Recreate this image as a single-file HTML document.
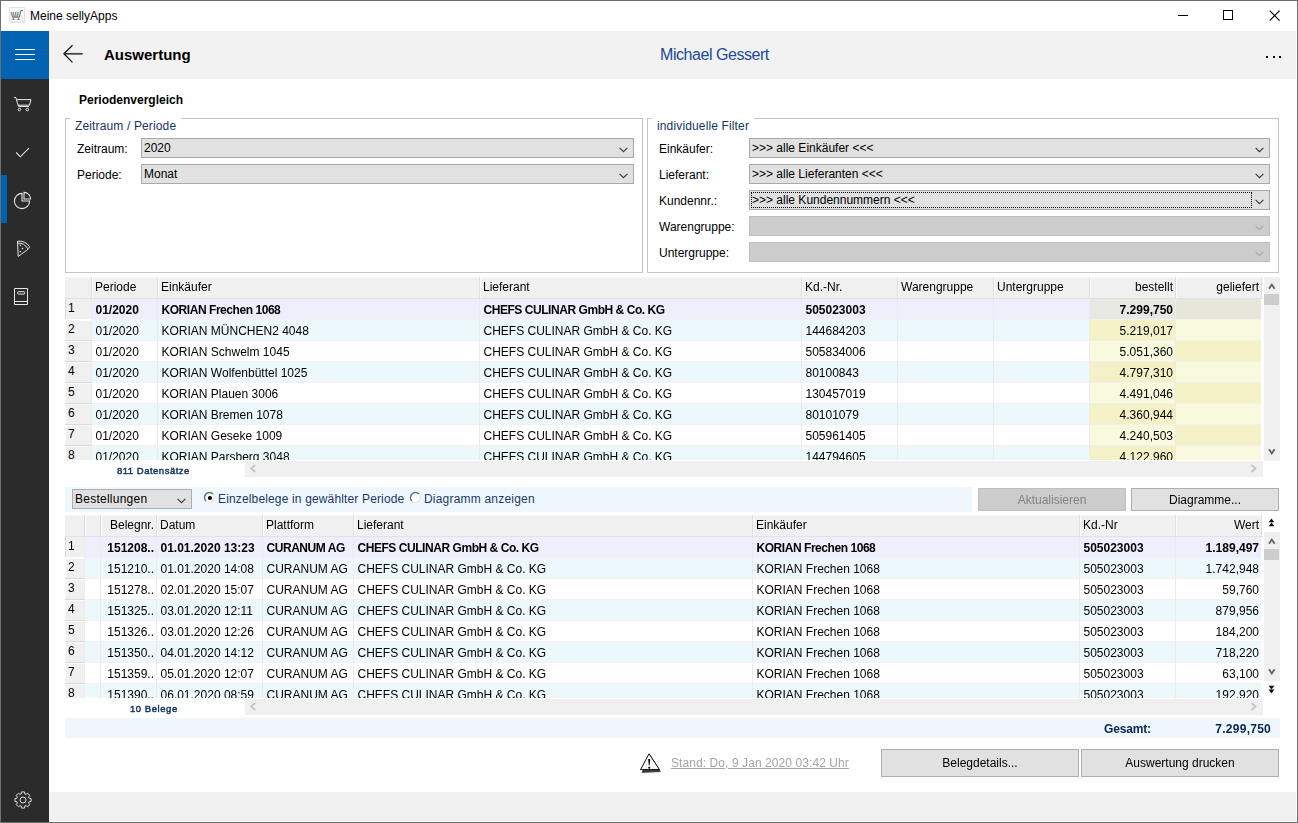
<!DOCTYPE html><html><head><meta charset="utf-8"><style>
html,body{margin:0;padding:0;width:1298px;height:823px;overflow:hidden;background:#fff;font-family:"Liberation Sans", sans-serif;}
div{box-sizing:border-box;}
</style></head><body>
<div style="position:absolute;left:0px;top:0px;width:1298px;height:823px;border:1px solid #6e6e6e;background:#fff;"></div>
<div style="position:absolute;left:9px;top:7px;width:16px;height:16px;background:linear-gradient(#fbfbfb,#ececec);border:1px solid #e2e2e2;"></div>
<svg style="position:absolute;left:9px;top:7px" width="16" height="16" viewBox="0 0 16 16"><path d="M2.2 5 L3.6 10 M4.3 5 L5.3 10 M6.6 5 L7 10 M9 5 L8.6 10 M11.7 3.6 L13.9 3.6 M11.7 3.6 L10.4 10.2 M3.4 10.2 L10.6 10.2" stroke="#808080" stroke-width="1.2" fill="none"/><path d="M3.2 12.3 L5.6 12.3 M8.2 12.3 L10.6 12.3 M4.4 11 L4.4 12.5 M9.4 11 L9.4 12.5" stroke="#808080" stroke-width="1" fill="none"/></svg>
<div style="position:absolute;left:30px;top:7.84px;line-height:16px;font-size:12px;font-weight:normal;color:#000;white-space:nowrap;">Meine sellyApps</div>
<div style="position:absolute;left:1178px;top:15px;width:10px;height:1px;background:#000;"></div>
<div style="position:absolute;left:1223px;top:10px;width:10px;height:10px;border:1px solid #000;"></div>
<svg style="position:absolute;left:1268.5px;top:9.5px" width="12" height="12" viewBox="0 0 12 12"><path d="M0.7 0.7 L10.6 10.6 M10.6 0.7 L0.7 10.6" stroke="#000" stroke-width="1.1" fill="none"/></svg>
<div style="position:absolute;left:1px;top:31px;width:48px;height:791px;background:#2b2b2b;"></div>
<div style="position:absolute;left:1px;top:31px;width:48px;height:48px;background:#0063b1;"></div>
<div style="position:absolute;left:15px;top:49px;width:20px;height:1px;background:#fff;"></div>
<div style="position:absolute;left:15px;top:54px;width:20px;height:1px;background:#fff;"></div>
<div style="position:absolute;left:15px;top:59px;width:20px;height:1px;background:#fff;"></div>
<div style="position:absolute;left:1px;top:175px;width:6px;height:48px;background:#0063b1;"></div>
<svg style="position:absolute;left:12px;top:95px" width="22" height="18" viewBox="0 0 22 18"><path d="M2 2.5 L3.8 2.5 L6.5 11.5 L17 11.5 M4.6 4.6 L19 4.6 L17.5 10.2 L6 10.2" stroke="#e6e6e6" stroke-width="1" fill="none" stroke-linejoin="round"/><circle cx="7.4" cy="14.5" r="1.3" stroke="#e6e6e6" stroke-width="1" fill="none"/><circle cx="15.3" cy="14.5" r="1.3" stroke="#e6e6e6" stroke-width="1" fill="none"/></svg>
<svg style="position:absolute;left:14px;top:146px" width="18" height="13" viewBox="0 0 18 13"><path d="M2.2 6.5 L6.3 10.8 L15 2.2" stroke="#e6e6e6" stroke-width="1.1" fill="none"/></svg>
<svg style="position:absolute;left:12px;top:190px" width="22" height="22" viewBox="0 0 22 22"><path d="M10 3.4 A7.6 7.6 0 1 0 17.6 11 L10 11 Z" stroke="#e6e6e6" stroke-width="1.1" fill="none"/><path d="M12 2.4 A6.6 6.6 0 0 1 18.6 9 L12 9 Z" stroke="#e6e6e6" stroke-width="1.1" fill="none"/></svg>
<svg style="position:absolute;left:14px;top:238px" width="18" height="22" viewBox="0 0 18 22"><path d="M4.2 18.4 L3.5 3.2 Q11.2 2.4 15.6 8.6 Q15.4 10.6 12.6 12.4 Z" stroke="#e6e6e6" stroke-width="1" fill="none" stroke-linejoin="round"/><path d="M4 5.3 Q10.2 4.6 13.8 10.8" stroke="#e6e6e6" stroke-width="1" fill="none"/><path d="M6.4 6.5 L7.3 7.4 L6.4 8.3 L5.5 7.4 Z M8.5 9.6 L9.4 10.5 L8.5 11.4 L7.6 10.5 Z M6.3 12.6 L7.2 13.5 L6.3 14.4 L5.4 13.5 Z" fill="#e6e6e6"/></svg>
<svg style="position:absolute;left:13px;top:287px" width="16" height="20" viewBox="0 0 16 20"><path d="M1.5 1.5 L14.5 1.5 L14.5 17.5 L1.5 17.5 Z M1.5 14.5 L14.5 14.5" stroke="#e6e6e6" stroke-width="1" fill="none"/><rect x="4.7" y="4.7" width="6.9" height="2.4" rx="0.6" stroke="#e6e6e6" stroke-width="1" fill="none"/></svg>
<svg style="position:absolute;left:5.5px;top:782.5px" width="34" height="34" viewBox="0 0 34 34"><path d="M15.08 11.10 L15.58 8.92 L18.42 8.92 L18.92 11.10 L19.81 11.48 L21.70 10.28 L23.72 12.30 L22.52 14.19 L22.90 15.08 L25.08 15.58 L25.08 18.42 L22.90 18.92 L22.52 19.81 L23.72 21.70 L21.70 23.72 L19.81 22.52 L18.92 22.90 L18.42 25.08 L15.58 25.08 L15.08 22.90 L14.19 22.52 L12.30 23.72 L10.28 21.70 L11.48 19.81 L11.10 18.92 L8.92 18.42 L8.92 15.58 L11.10 15.08 L11.48 14.19 L10.28 12.30 L12.30 10.28 L14.19 11.48 Z" stroke="#e6e6e6" stroke-width="1" fill="none" stroke-linejoin="miter"/><circle cx="17" cy="17" r="3" stroke="#e6e6e6" stroke-width="1" fill="none"/></svg>
<div style="position:absolute;left:49px;top:31px;width:1247px;height:48px;background:#f2f2f2;"></div>
<svg style="position:absolute;left:62px;top:44px" width="22" height="20" viewBox="0 0 22 20"><path d="M3 9.8 L20.7 9.8" stroke="#474747" stroke-width="1.8" fill="none"/><path d="M10.5 1.3 L1.9 9.8 L10.5 18.4" stroke="#111" stroke-width="1.25" fill="none"/></svg>
<div style="position:absolute;left:104px;top:45.30px;line-height:19px;font-size:15px;font-weight:bold;color:#000;white-space:nowrap;">Auswertung</div>
<div style="position:absolute;left:660px;top:45.46px;line-height:20px;font-size:16px;font-weight:normal;color:#1a4a98;white-space:nowrap;letter-spacing:-0.45px;">Michael Gessert</div>
<div style="position:absolute;left:1266.0px;top:55.5px;width:2px;height:2px;background:#000;"></div>
<div style="position:absolute;left:1272.6px;top:55.5px;width:2px;height:2px;background:#000;"></div>
<div style="position:absolute;left:1279.2px;top:55.5px;width:2px;height:2px;background:#000;"></div>
<div style="position:absolute;left:79px;top:91.84px;line-height:16px;font-size:12px;font-weight:bold;color:#000;white-space:nowrap;">Periodenvergleich</div>
<div style="position:absolute;left:65px;top:118px;width:1px;height:155px;background:#c5c5c5;"></div>
<div style="position:absolute;left:642px;top:118px;width:1px;height:155px;background:#c5c5c5;"></div>
<div style="position:absolute;left:65px;top:272px;width:578px;height:1px;background:#c5c5c5;"></div>
<div style="position:absolute;left:65px;top:118px;width:5px;height:1px;background:#c5c5c5;"></div>
<div style="position:absolute;left:181px;top:118px;width:462px;height:1px;background:#c5c5c5;"></div>
<div style="position:absolute;left:75px;top:117.84px;line-height:16px;font-size:12px;font-weight:normal;color:#17345f;white-space:nowrap;letter-spacing:0.14px;">Zeitraum / Periode</div>
<div style="position:absolute;left:77px;top:140.84px;line-height:16px;font-size:12px;font-weight:normal;color:#000;white-space:nowrap;">Zeitraum:</div>
<div style="position:absolute;left:77px;top:166.84px;line-height:16px;font-size:12px;font-weight:normal;color:#000;white-space:nowrap;">Periode:</div>
<div style="position:absolute;left:141px;top:138px;width:493px;height:20px;background:#e1e1e1;border:1px solid #a7a7ae;"></div>
<svg style="position:absolute;left:619.0px;top:147.0px" width="9" height="6" viewBox="0 0 9 6"><path d="M0.6 0.8 L4.5 4.7 L8.4 0.8" stroke="#3c3c3c" stroke-width="1.15" fill="none"/></svg>
<div style="position:absolute;left:144px;top:139.84px;line-height:16px;font-size:12px;font-weight:normal;color:#000;white-space:nowrap;">2020</div>
<div style="position:absolute;left:141px;top:164px;width:493px;height:20px;background:#e1e1e1;border:1px solid #a7a7ae;"></div>
<svg style="position:absolute;left:619.0px;top:173.0px" width="9" height="6" viewBox="0 0 9 6"><path d="M0.6 0.8 L4.5 4.7 L8.4 0.8" stroke="#3c3c3c" stroke-width="1.15" fill="none"/></svg>
<div style="position:absolute;left:144px;top:165.84px;line-height:16px;font-size:12px;font-weight:normal;color:#000;white-space:nowrap;">Monat</div>
<div style="position:absolute;left:647px;top:118px;width:1px;height:155px;background:#c5c5c5;"></div>
<div style="position:absolute;left:1278px;top:118px;width:1px;height:155px;background:#c5c5c5;"></div>
<div style="position:absolute;left:647px;top:272px;width:632px;height:1px;background:#c5c5c5;"></div>
<div style="position:absolute;left:647px;top:118px;width:5px;height:1px;background:#c5c5c5;"></div>
<div style="position:absolute;left:754px;top:118px;width:525px;height:1px;background:#c5c5c5;"></div>
<div style="position:absolute;left:657px;top:117.84px;line-height:16px;font-size:12px;font-weight:normal;color:#17345f;white-space:nowrap;letter-spacing:0.14px;">individuelle Filter</div>
<div style="position:absolute;left:659px;top:140.84px;line-height:16px;font-size:12px;font-weight:normal;color:#000;white-space:nowrap;">Einkäufer:</div>
<div style="position:absolute;left:749px;top:138px;width:521px;height:20px;background:#e1e1e1;border:1px solid #a7a7ae;"></div>
<svg style="position:absolute;left:1255.0px;top:147.0px" width="9" height="6" viewBox="0 0 9 6"><path d="M0.6 0.8 L4.5 4.7 L8.4 0.8" stroke="#3c3c3c" stroke-width="1.15" fill="none"/></svg>
<div style="position:absolute;left:752px;top:139.84px;line-height:16px;font-size:12px;font-weight:normal;color:#000;white-space:nowrap;">&gt;&gt;&gt; alle Einkäufer &lt;&lt;&lt;</div>
<div style="position:absolute;left:659px;top:166.84px;line-height:16px;font-size:12px;font-weight:normal;color:#000;white-space:nowrap;">Lieferant:</div>
<div style="position:absolute;left:749px;top:164px;width:521px;height:20px;background:#e1e1e1;border:1px solid #a7a7ae;"></div>
<svg style="position:absolute;left:1255.0px;top:173.0px" width="9" height="6" viewBox="0 0 9 6"><path d="M0.6 0.8 L4.5 4.7 L8.4 0.8" stroke="#3c3c3c" stroke-width="1.15" fill="none"/></svg>
<div style="position:absolute;left:752px;top:165.84px;line-height:16px;font-size:12px;font-weight:normal;color:#000;white-space:nowrap;">&gt;&gt;&gt; alle Lieferanten &lt;&lt;&lt;</div>
<div style="position:absolute;left:659px;top:192.84px;line-height:16px;font-size:12px;font-weight:normal;color:#000;white-space:nowrap;">Kundennr.:</div>
<div style="position:absolute;left:749px;top:190px;width:521px;height:20px;background:#e1e1e1;border:1px solid #a7a7ae;"></div>
<svg style="position:absolute;left:1255.0px;top:199.0px" width="9" height="6" viewBox="0 0 9 6"><path d="M0.6 0.8 L4.5 4.7 L8.4 0.8" stroke="#3c3c3c" stroke-width="1.15" fill="none"/></svg>
<div style="position:absolute;left:751px;top:192px;width:501px;height:16px;border:1px dotted #000;"></div>
<div style="position:absolute;left:752px;top:191.84px;line-height:16px;font-size:12px;font-weight:normal;color:#000;white-space:nowrap;">&gt;&gt;&gt; alle Kundennummern &lt;&lt;&lt;</div>
<div style="position:absolute;left:659px;top:218.84px;line-height:16px;font-size:12px;font-weight:normal;color:#000;white-space:nowrap;">Warengruppe:</div>
<div style="position:absolute;left:749px;top:216px;width:521px;height:20px;background:#cccccc;border:1px solid #bfbfbf;"></div>
<svg style="position:absolute;left:1255.0px;top:225.0px" width="9" height="6" viewBox="0 0 9 6"><path d="M0.6 0.8 L4.5 4.7 L8.4 0.8" stroke="#a8a8a8" stroke-width="1.15" fill="none"/></svg>
<div style="position:absolute;left:659px;top:244.84px;line-height:16px;font-size:12px;font-weight:normal;color:#000;white-space:nowrap;">Untergruppe:</div>
<div style="position:absolute;left:749px;top:242px;width:521px;height:20px;background:#cccccc;border:1px solid #bfbfbf;"></div>
<svg style="position:absolute;left:1255.0px;top:251.0px" width="9" height="6" viewBox="0 0 9 6"><path d="M0.6 0.8 L4.5 4.7 L8.4 0.8" stroke="#a8a8a8" stroke-width="1.15" fill="none"/></svg>
<div style="position:absolute;left:65px;top:277px;width:1196px;height:21px;background:#f0f0f0;"></div>
<div style="position:absolute;left:65px;top:277px;width:1196px;height:1px;background:#f8f8f8;"></div>
<div style="position:absolute;left:65px;top:298px;width:1198px;height:1px;background:#e2e2e2;"></div>
<div style="position:absolute;left:1261px;top:277px;width:1px;height:21px;background:#e0e0e0;"></div>
<div style="position:absolute;left:0;top:299px;width:1298px;height:161px;overflow:hidden;">
<div style="position:absolute;left:65px;top:0px;width:26px;height:20px;background:#f0f0f0;"></div>
<div style="position:absolute;left:65px;top:0px;width:1px;height:20px;background:#d6d6d6;"></div>
<div style="position:absolute;left:65px;top:20px;width:26px;height:1px;background:#ffffff;"></div>
<div style="position:absolute;left:92px;top:0px;width:65px;height:20px;background:#efeefc;"></div>
<div style="position:absolute;left:92px;top:20px;width:65px;height:1px;background:#f1f1f1;"></div>
<div style="position:absolute;left:158px;top:0px;width:321px;height:20px;background:#efeefc;"></div>
<div style="position:absolute;left:158px;top:20px;width:321px;height:1px;background:#f1f1f1;"></div>
<div style="position:absolute;left:480px;top:0px;width:321px;height:20px;background:#efeefc;"></div>
<div style="position:absolute;left:480px;top:20px;width:321px;height:1px;background:#f1f1f1;"></div>
<div style="position:absolute;left:802px;top:0px;width:95px;height:20px;background:#efeefc;"></div>
<div style="position:absolute;left:802px;top:20px;width:95px;height:1px;background:#f1f1f1;"></div>
<div style="position:absolute;left:898px;top:0px;width:95px;height:20px;background:#efeefc;"></div>
<div style="position:absolute;left:898px;top:20px;width:95px;height:1px;background:#f1f1f1;"></div>
<div style="position:absolute;left:994px;top:0px;width:95px;height:20px;background:#efeefc;"></div>
<div style="position:absolute;left:994px;top:20px;width:95px;height:1px;background:#f1f1f1;"></div>
<div style="position:absolute;left:1090px;top:0px;width:85px;height:20px;background:#e8e8e2;"></div>
<div style="position:absolute;left:1090px;top:20px;width:85px;height:1px;background:#f1f1f1;"></div>
<div style="position:absolute;left:1176px;top:0px;width:85px;height:20px;background:#e6e6da;"></div>
<div style="position:absolute;left:1176px;top:20px;width:85px;height:1px;background:#f1f1f1;"></div>
<div style="position:absolute;left:91px;top:0px;width:1px;height:21px;background:#ebebeb;"></div>
<div style="position:absolute;left:157px;top:0px;width:1px;height:21px;background:#ebebeb;"></div>
<div style="position:absolute;left:479px;top:0px;width:1px;height:21px;background:#ebebeb;"></div>
<div style="position:absolute;left:801px;top:0px;width:1px;height:21px;background:#ebebeb;"></div>
<div style="position:absolute;left:897px;top:0px;width:1px;height:21px;background:#ebebeb;"></div>
<div style="position:absolute;left:993px;top:0px;width:1px;height:21px;background:#ebebeb;"></div>
<div style="position:absolute;left:1089px;top:0px;width:1px;height:21px;background:#ebebeb;"></div>
<div style="position:absolute;left:1175px;top:0px;width:1px;height:21px;background:#ebebeb;"></div>
<div style="position:absolute;left:68px;top:0.80px;line-height:16px;font-size:12px;color:#000;">1</div>
<div style="position:absolute;left:65px;top:21px;width:26px;height:20px;background:#f0f0f0;"></div>
<div style="position:absolute;left:65px;top:21px;width:26px;height:1px;background:#fbfbfb;"></div>
<div style="position:absolute;left:65px;top:21px;width:1px;height:20px;background:#fbfbfb;"></div>
<div style="position:absolute;left:65px;top:41px;width:26px;height:1px;background:#d9d9d9;"></div>
<div style="position:absolute;left:92px;top:21px;width:65px;height:20px;background:#edf8fd;"></div>
<div style="position:absolute;left:92px;top:41px;width:65px;height:1px;background:#f1f1f1;"></div>
<div style="position:absolute;left:158px;top:21px;width:321px;height:20px;background:#edf8fd;"></div>
<div style="position:absolute;left:158px;top:41px;width:321px;height:1px;background:#f1f1f1;"></div>
<div style="position:absolute;left:480px;top:21px;width:321px;height:20px;background:#edf8fd;"></div>
<div style="position:absolute;left:480px;top:41px;width:321px;height:1px;background:#f1f1f1;"></div>
<div style="position:absolute;left:802px;top:21px;width:95px;height:20px;background:#edf8fd;"></div>
<div style="position:absolute;left:802px;top:41px;width:95px;height:1px;background:#f1f1f1;"></div>
<div style="position:absolute;left:898px;top:21px;width:95px;height:20px;background:#edf8fd;"></div>
<div style="position:absolute;left:898px;top:41px;width:95px;height:1px;background:#f1f1f1;"></div>
<div style="position:absolute;left:994px;top:21px;width:95px;height:20px;background:#edf8fd;"></div>
<div style="position:absolute;left:994px;top:41px;width:95px;height:1px;background:#f1f1f1;"></div>
<div style="position:absolute;left:1090px;top:21px;width:85px;height:20px;background:#f4f1c6;"></div>
<div style="position:absolute;left:1090px;top:41px;width:85px;height:1px;background:#f1f1f1;"></div>
<div style="position:absolute;left:1176px;top:21px;width:85px;height:20px;background:#f9f9dd;"></div>
<div style="position:absolute;left:1176px;top:41px;width:85px;height:1px;background:#f1f1f1;"></div>
<div style="position:absolute;left:91px;top:21px;width:1px;height:21px;background:#ebebeb;"></div>
<div style="position:absolute;left:157px;top:21px;width:1px;height:21px;background:#ebebeb;"></div>
<div style="position:absolute;left:479px;top:21px;width:1px;height:21px;background:#ebebeb;"></div>
<div style="position:absolute;left:801px;top:21px;width:1px;height:21px;background:#ebebeb;"></div>
<div style="position:absolute;left:897px;top:21px;width:1px;height:21px;background:#ebebeb;"></div>
<div style="position:absolute;left:993px;top:21px;width:1px;height:21px;background:#ebebeb;"></div>
<div style="position:absolute;left:1089px;top:21px;width:1px;height:21px;background:#ebebeb;"></div>
<div style="position:absolute;left:1175px;top:21px;width:1px;height:21px;background:#ebebeb;"></div>
<div style="position:absolute;left:68px;top:21.80px;line-height:16px;font-size:12px;color:#000;">2</div>
<div style="position:absolute;left:65px;top:42px;width:26px;height:20px;background:#f0f0f0;"></div>
<div style="position:absolute;left:65px;top:42px;width:26px;height:1px;background:#fbfbfb;"></div>
<div style="position:absolute;left:65px;top:42px;width:1px;height:20px;background:#fbfbfb;"></div>
<div style="position:absolute;left:65px;top:62px;width:26px;height:1px;background:#d9d9d9;"></div>
<div style="position:absolute;left:92px;top:42px;width:65px;height:20px;background:#ffffff;"></div>
<div style="position:absolute;left:92px;top:62px;width:65px;height:1px;background:#f1f1f1;"></div>
<div style="position:absolute;left:158px;top:42px;width:321px;height:20px;background:#ffffff;"></div>
<div style="position:absolute;left:158px;top:62px;width:321px;height:1px;background:#f1f1f1;"></div>
<div style="position:absolute;left:480px;top:42px;width:321px;height:20px;background:#ffffff;"></div>
<div style="position:absolute;left:480px;top:62px;width:321px;height:1px;background:#f1f1f1;"></div>
<div style="position:absolute;left:802px;top:42px;width:95px;height:20px;background:#ffffff;"></div>
<div style="position:absolute;left:802px;top:62px;width:95px;height:1px;background:#f1f1f1;"></div>
<div style="position:absolute;left:898px;top:42px;width:95px;height:20px;background:#ffffff;"></div>
<div style="position:absolute;left:898px;top:62px;width:95px;height:1px;background:#f1f1f1;"></div>
<div style="position:absolute;left:994px;top:42px;width:95px;height:20px;background:#ffffff;"></div>
<div style="position:absolute;left:994px;top:62px;width:95px;height:1px;background:#f1f1f1;"></div>
<div style="position:absolute;left:1090px;top:42px;width:85px;height:20px;background:#f9f9dd;"></div>
<div style="position:absolute;left:1090px;top:62px;width:85px;height:1px;background:#f1f1f1;"></div>
<div style="position:absolute;left:1176px;top:42px;width:85px;height:20px;background:#f4f1c6;"></div>
<div style="position:absolute;left:1176px;top:62px;width:85px;height:1px;background:#f1f1f1;"></div>
<div style="position:absolute;left:91px;top:42px;width:1px;height:21px;background:#ebebeb;"></div>
<div style="position:absolute;left:157px;top:42px;width:1px;height:21px;background:#ebebeb;"></div>
<div style="position:absolute;left:479px;top:42px;width:1px;height:21px;background:#ebebeb;"></div>
<div style="position:absolute;left:801px;top:42px;width:1px;height:21px;background:#ebebeb;"></div>
<div style="position:absolute;left:897px;top:42px;width:1px;height:21px;background:#ebebeb;"></div>
<div style="position:absolute;left:993px;top:42px;width:1px;height:21px;background:#ebebeb;"></div>
<div style="position:absolute;left:1089px;top:42px;width:1px;height:21px;background:#ebebeb;"></div>
<div style="position:absolute;left:1175px;top:42px;width:1px;height:21px;background:#ebebeb;"></div>
<div style="position:absolute;left:68px;top:42.80px;line-height:16px;font-size:12px;color:#000;">3</div>
<div style="position:absolute;left:65px;top:63px;width:26px;height:20px;background:#f0f0f0;"></div>
<div style="position:absolute;left:65px;top:63px;width:26px;height:1px;background:#fbfbfb;"></div>
<div style="position:absolute;left:65px;top:63px;width:1px;height:20px;background:#fbfbfb;"></div>
<div style="position:absolute;left:65px;top:83px;width:26px;height:1px;background:#d9d9d9;"></div>
<div style="position:absolute;left:92px;top:63px;width:65px;height:20px;background:#edf8fd;"></div>
<div style="position:absolute;left:92px;top:83px;width:65px;height:1px;background:#f1f1f1;"></div>
<div style="position:absolute;left:158px;top:63px;width:321px;height:20px;background:#edf8fd;"></div>
<div style="position:absolute;left:158px;top:83px;width:321px;height:1px;background:#f1f1f1;"></div>
<div style="position:absolute;left:480px;top:63px;width:321px;height:20px;background:#edf8fd;"></div>
<div style="position:absolute;left:480px;top:83px;width:321px;height:1px;background:#f1f1f1;"></div>
<div style="position:absolute;left:802px;top:63px;width:95px;height:20px;background:#edf8fd;"></div>
<div style="position:absolute;left:802px;top:83px;width:95px;height:1px;background:#f1f1f1;"></div>
<div style="position:absolute;left:898px;top:63px;width:95px;height:20px;background:#edf8fd;"></div>
<div style="position:absolute;left:898px;top:83px;width:95px;height:1px;background:#f1f1f1;"></div>
<div style="position:absolute;left:994px;top:63px;width:95px;height:20px;background:#edf8fd;"></div>
<div style="position:absolute;left:994px;top:83px;width:95px;height:1px;background:#f1f1f1;"></div>
<div style="position:absolute;left:1090px;top:63px;width:85px;height:20px;background:#f4f1c6;"></div>
<div style="position:absolute;left:1090px;top:83px;width:85px;height:1px;background:#f1f1f1;"></div>
<div style="position:absolute;left:1176px;top:63px;width:85px;height:20px;background:#f9f9dd;"></div>
<div style="position:absolute;left:1176px;top:83px;width:85px;height:1px;background:#f1f1f1;"></div>
<div style="position:absolute;left:91px;top:63px;width:1px;height:21px;background:#ebebeb;"></div>
<div style="position:absolute;left:157px;top:63px;width:1px;height:21px;background:#ebebeb;"></div>
<div style="position:absolute;left:479px;top:63px;width:1px;height:21px;background:#ebebeb;"></div>
<div style="position:absolute;left:801px;top:63px;width:1px;height:21px;background:#ebebeb;"></div>
<div style="position:absolute;left:897px;top:63px;width:1px;height:21px;background:#ebebeb;"></div>
<div style="position:absolute;left:993px;top:63px;width:1px;height:21px;background:#ebebeb;"></div>
<div style="position:absolute;left:1089px;top:63px;width:1px;height:21px;background:#ebebeb;"></div>
<div style="position:absolute;left:1175px;top:63px;width:1px;height:21px;background:#ebebeb;"></div>
<div style="position:absolute;left:68px;top:63.80px;line-height:16px;font-size:12px;color:#000;">4</div>
<div style="position:absolute;left:65px;top:84px;width:26px;height:20px;background:#f0f0f0;"></div>
<div style="position:absolute;left:65px;top:84px;width:26px;height:1px;background:#fbfbfb;"></div>
<div style="position:absolute;left:65px;top:84px;width:1px;height:20px;background:#fbfbfb;"></div>
<div style="position:absolute;left:65px;top:104px;width:26px;height:1px;background:#d9d9d9;"></div>
<div style="position:absolute;left:92px;top:84px;width:65px;height:20px;background:#ffffff;"></div>
<div style="position:absolute;left:92px;top:104px;width:65px;height:1px;background:#f1f1f1;"></div>
<div style="position:absolute;left:158px;top:84px;width:321px;height:20px;background:#ffffff;"></div>
<div style="position:absolute;left:158px;top:104px;width:321px;height:1px;background:#f1f1f1;"></div>
<div style="position:absolute;left:480px;top:84px;width:321px;height:20px;background:#ffffff;"></div>
<div style="position:absolute;left:480px;top:104px;width:321px;height:1px;background:#f1f1f1;"></div>
<div style="position:absolute;left:802px;top:84px;width:95px;height:20px;background:#ffffff;"></div>
<div style="position:absolute;left:802px;top:104px;width:95px;height:1px;background:#f1f1f1;"></div>
<div style="position:absolute;left:898px;top:84px;width:95px;height:20px;background:#ffffff;"></div>
<div style="position:absolute;left:898px;top:104px;width:95px;height:1px;background:#f1f1f1;"></div>
<div style="position:absolute;left:994px;top:84px;width:95px;height:20px;background:#ffffff;"></div>
<div style="position:absolute;left:994px;top:104px;width:95px;height:1px;background:#f1f1f1;"></div>
<div style="position:absolute;left:1090px;top:84px;width:85px;height:20px;background:#f9f9dd;"></div>
<div style="position:absolute;left:1090px;top:104px;width:85px;height:1px;background:#f1f1f1;"></div>
<div style="position:absolute;left:1176px;top:84px;width:85px;height:20px;background:#f4f1c6;"></div>
<div style="position:absolute;left:1176px;top:104px;width:85px;height:1px;background:#f1f1f1;"></div>
<div style="position:absolute;left:91px;top:84px;width:1px;height:21px;background:#ebebeb;"></div>
<div style="position:absolute;left:157px;top:84px;width:1px;height:21px;background:#ebebeb;"></div>
<div style="position:absolute;left:479px;top:84px;width:1px;height:21px;background:#ebebeb;"></div>
<div style="position:absolute;left:801px;top:84px;width:1px;height:21px;background:#ebebeb;"></div>
<div style="position:absolute;left:897px;top:84px;width:1px;height:21px;background:#ebebeb;"></div>
<div style="position:absolute;left:993px;top:84px;width:1px;height:21px;background:#ebebeb;"></div>
<div style="position:absolute;left:1089px;top:84px;width:1px;height:21px;background:#ebebeb;"></div>
<div style="position:absolute;left:1175px;top:84px;width:1px;height:21px;background:#ebebeb;"></div>
<div style="position:absolute;left:68px;top:84.80px;line-height:16px;font-size:12px;color:#000;">5</div>
<div style="position:absolute;left:65px;top:105px;width:26px;height:20px;background:#f0f0f0;"></div>
<div style="position:absolute;left:65px;top:105px;width:26px;height:1px;background:#fbfbfb;"></div>
<div style="position:absolute;left:65px;top:105px;width:1px;height:20px;background:#fbfbfb;"></div>
<div style="position:absolute;left:65px;top:125px;width:26px;height:1px;background:#d9d9d9;"></div>
<div style="position:absolute;left:92px;top:105px;width:65px;height:20px;background:#edf8fd;"></div>
<div style="position:absolute;left:92px;top:125px;width:65px;height:1px;background:#f1f1f1;"></div>
<div style="position:absolute;left:158px;top:105px;width:321px;height:20px;background:#edf8fd;"></div>
<div style="position:absolute;left:158px;top:125px;width:321px;height:1px;background:#f1f1f1;"></div>
<div style="position:absolute;left:480px;top:105px;width:321px;height:20px;background:#edf8fd;"></div>
<div style="position:absolute;left:480px;top:125px;width:321px;height:1px;background:#f1f1f1;"></div>
<div style="position:absolute;left:802px;top:105px;width:95px;height:20px;background:#edf8fd;"></div>
<div style="position:absolute;left:802px;top:125px;width:95px;height:1px;background:#f1f1f1;"></div>
<div style="position:absolute;left:898px;top:105px;width:95px;height:20px;background:#edf8fd;"></div>
<div style="position:absolute;left:898px;top:125px;width:95px;height:1px;background:#f1f1f1;"></div>
<div style="position:absolute;left:994px;top:105px;width:95px;height:20px;background:#edf8fd;"></div>
<div style="position:absolute;left:994px;top:125px;width:95px;height:1px;background:#f1f1f1;"></div>
<div style="position:absolute;left:1090px;top:105px;width:85px;height:20px;background:#f4f1c6;"></div>
<div style="position:absolute;left:1090px;top:125px;width:85px;height:1px;background:#f1f1f1;"></div>
<div style="position:absolute;left:1176px;top:105px;width:85px;height:20px;background:#f9f9dd;"></div>
<div style="position:absolute;left:1176px;top:125px;width:85px;height:1px;background:#f1f1f1;"></div>
<div style="position:absolute;left:91px;top:105px;width:1px;height:21px;background:#ebebeb;"></div>
<div style="position:absolute;left:157px;top:105px;width:1px;height:21px;background:#ebebeb;"></div>
<div style="position:absolute;left:479px;top:105px;width:1px;height:21px;background:#ebebeb;"></div>
<div style="position:absolute;left:801px;top:105px;width:1px;height:21px;background:#ebebeb;"></div>
<div style="position:absolute;left:897px;top:105px;width:1px;height:21px;background:#ebebeb;"></div>
<div style="position:absolute;left:993px;top:105px;width:1px;height:21px;background:#ebebeb;"></div>
<div style="position:absolute;left:1089px;top:105px;width:1px;height:21px;background:#ebebeb;"></div>
<div style="position:absolute;left:1175px;top:105px;width:1px;height:21px;background:#ebebeb;"></div>
<div style="position:absolute;left:68px;top:105.80px;line-height:16px;font-size:12px;color:#000;">6</div>
<div style="position:absolute;left:65px;top:126px;width:26px;height:20px;background:#f0f0f0;"></div>
<div style="position:absolute;left:65px;top:126px;width:26px;height:1px;background:#fbfbfb;"></div>
<div style="position:absolute;left:65px;top:126px;width:1px;height:20px;background:#fbfbfb;"></div>
<div style="position:absolute;left:65px;top:146px;width:26px;height:1px;background:#d9d9d9;"></div>
<div style="position:absolute;left:92px;top:126px;width:65px;height:20px;background:#ffffff;"></div>
<div style="position:absolute;left:92px;top:146px;width:65px;height:1px;background:#f1f1f1;"></div>
<div style="position:absolute;left:158px;top:126px;width:321px;height:20px;background:#ffffff;"></div>
<div style="position:absolute;left:158px;top:146px;width:321px;height:1px;background:#f1f1f1;"></div>
<div style="position:absolute;left:480px;top:126px;width:321px;height:20px;background:#ffffff;"></div>
<div style="position:absolute;left:480px;top:146px;width:321px;height:1px;background:#f1f1f1;"></div>
<div style="position:absolute;left:802px;top:126px;width:95px;height:20px;background:#ffffff;"></div>
<div style="position:absolute;left:802px;top:146px;width:95px;height:1px;background:#f1f1f1;"></div>
<div style="position:absolute;left:898px;top:126px;width:95px;height:20px;background:#ffffff;"></div>
<div style="position:absolute;left:898px;top:146px;width:95px;height:1px;background:#f1f1f1;"></div>
<div style="position:absolute;left:994px;top:126px;width:95px;height:20px;background:#ffffff;"></div>
<div style="position:absolute;left:994px;top:146px;width:95px;height:1px;background:#f1f1f1;"></div>
<div style="position:absolute;left:1090px;top:126px;width:85px;height:20px;background:#f9f9dd;"></div>
<div style="position:absolute;left:1090px;top:146px;width:85px;height:1px;background:#f1f1f1;"></div>
<div style="position:absolute;left:1176px;top:126px;width:85px;height:20px;background:#f4f1c6;"></div>
<div style="position:absolute;left:1176px;top:146px;width:85px;height:1px;background:#f1f1f1;"></div>
<div style="position:absolute;left:91px;top:126px;width:1px;height:21px;background:#ebebeb;"></div>
<div style="position:absolute;left:157px;top:126px;width:1px;height:21px;background:#ebebeb;"></div>
<div style="position:absolute;left:479px;top:126px;width:1px;height:21px;background:#ebebeb;"></div>
<div style="position:absolute;left:801px;top:126px;width:1px;height:21px;background:#ebebeb;"></div>
<div style="position:absolute;left:897px;top:126px;width:1px;height:21px;background:#ebebeb;"></div>
<div style="position:absolute;left:993px;top:126px;width:1px;height:21px;background:#ebebeb;"></div>
<div style="position:absolute;left:1089px;top:126px;width:1px;height:21px;background:#ebebeb;"></div>
<div style="position:absolute;left:1175px;top:126px;width:1px;height:21px;background:#ebebeb;"></div>
<div style="position:absolute;left:68px;top:126.80px;line-height:16px;font-size:12px;color:#000;">7</div>
<div style="position:absolute;left:65px;top:147px;width:26px;height:20px;background:#f0f0f0;"></div>
<div style="position:absolute;left:65px;top:147px;width:26px;height:1px;background:#fbfbfb;"></div>
<div style="position:absolute;left:65px;top:147px;width:1px;height:20px;background:#fbfbfb;"></div>
<div style="position:absolute;left:65px;top:167px;width:26px;height:1px;background:#d9d9d9;"></div>
<div style="position:absolute;left:92px;top:147px;width:65px;height:20px;background:#edf8fd;"></div>
<div style="position:absolute;left:92px;top:167px;width:65px;height:1px;background:#f1f1f1;"></div>
<div style="position:absolute;left:158px;top:147px;width:321px;height:20px;background:#edf8fd;"></div>
<div style="position:absolute;left:158px;top:167px;width:321px;height:1px;background:#f1f1f1;"></div>
<div style="position:absolute;left:480px;top:147px;width:321px;height:20px;background:#edf8fd;"></div>
<div style="position:absolute;left:480px;top:167px;width:321px;height:1px;background:#f1f1f1;"></div>
<div style="position:absolute;left:802px;top:147px;width:95px;height:20px;background:#edf8fd;"></div>
<div style="position:absolute;left:802px;top:167px;width:95px;height:1px;background:#f1f1f1;"></div>
<div style="position:absolute;left:898px;top:147px;width:95px;height:20px;background:#edf8fd;"></div>
<div style="position:absolute;left:898px;top:167px;width:95px;height:1px;background:#f1f1f1;"></div>
<div style="position:absolute;left:994px;top:147px;width:95px;height:20px;background:#edf8fd;"></div>
<div style="position:absolute;left:994px;top:167px;width:95px;height:1px;background:#f1f1f1;"></div>
<div style="position:absolute;left:1090px;top:147px;width:85px;height:20px;background:#f4f1c6;"></div>
<div style="position:absolute;left:1090px;top:167px;width:85px;height:1px;background:#f1f1f1;"></div>
<div style="position:absolute;left:1176px;top:147px;width:85px;height:20px;background:#f9f9dd;"></div>
<div style="position:absolute;left:1176px;top:167px;width:85px;height:1px;background:#f1f1f1;"></div>
<div style="position:absolute;left:91px;top:147px;width:1px;height:21px;background:#ebebeb;"></div>
<div style="position:absolute;left:157px;top:147px;width:1px;height:21px;background:#ebebeb;"></div>
<div style="position:absolute;left:479px;top:147px;width:1px;height:21px;background:#ebebeb;"></div>
<div style="position:absolute;left:801px;top:147px;width:1px;height:21px;background:#ebebeb;"></div>
<div style="position:absolute;left:897px;top:147px;width:1px;height:21px;background:#ebebeb;"></div>
<div style="position:absolute;left:993px;top:147px;width:1px;height:21px;background:#ebebeb;"></div>
<div style="position:absolute;left:1089px;top:147px;width:1px;height:21px;background:#ebebeb;"></div>
<div style="position:absolute;left:1175px;top:147px;width:1px;height:21px;background:#ebebeb;"></div>
<div style="position:absolute;left:68px;top:147.80px;line-height:16px;font-size:12px;color:#000;">8</div>
</div>
<div style="position:absolute;left:0;top:0;width:1298px;height:460px;overflow:hidden;will-change:transform;">
<div style="position:absolute;left:95.5px;width:61.5px;top:302.34px;height:16px;line-height:16px;font-size:12px;font-weight:bold;color:#000;white-space:nowrap;text-align:left;overflow:hidden;overflow:hidden;">01/2020</div>
<div style="position:absolute;left:161.5px;width:317.5px;top:302.34px;height:16px;line-height:16px;font-size:12px;font-weight:bold;color:#000;white-space:nowrap;text-align:left;overflow:hidden;overflow:hidden;letter-spacing:-0.45px;">KORIAN Frechen 1068</div>
<div style="position:absolute;left:483.5px;width:317.5px;top:302.34px;height:16px;line-height:16px;font-size:12px;font-weight:bold;color:#000;white-space:nowrap;text-align:left;overflow:hidden;overflow:hidden;letter-spacing:-0.45px;">CHEFS CULINAR GmbH &amp; Co. KG</div>
<div style="position:absolute;left:805.5px;width:91.5px;top:302.34px;height:16px;line-height:16px;font-size:12px;font-weight:bold;color:#000;white-space:nowrap;text-align:left;overflow:hidden;overflow:hidden;">505023003</div>
<div style="position:absolute;left:1090px;width:83px;top:302.34px;height:16px;line-height:16px;font-size:12px;font-weight:bold;color:#000;white-space:nowrap;text-align:right;overflow:hidden;overflow:hidden;">7.299,750</div>
<div style="position:absolute;left:95.5px;width:61.5px;top:323.34px;height:16px;line-height:16px;font-size:12px;font-weight:normal;color:#000;white-space:nowrap;text-align:left;overflow:hidden;overflow:hidden;">01/2020</div>
<div style="position:absolute;left:161.5px;width:317.5px;top:323.34px;height:16px;line-height:16px;font-size:12px;font-weight:normal;color:#000;white-space:nowrap;text-align:left;overflow:hidden;overflow:hidden;">KORIAN MÜNCHEN2 4048</div>
<div style="position:absolute;left:483.5px;width:317.5px;top:323.34px;height:16px;line-height:16px;font-size:12px;font-weight:normal;color:#000;white-space:nowrap;text-align:left;overflow:hidden;overflow:hidden;">CHEFS CULINAR GmbH &amp; Co. KG</div>
<div style="position:absolute;left:805.5px;width:91.5px;top:323.34px;height:16px;line-height:16px;font-size:12px;font-weight:normal;color:#000;white-space:nowrap;text-align:left;overflow:hidden;overflow:hidden;">144684203</div>
<div style="position:absolute;left:1090px;width:83px;top:323.34px;height:16px;line-height:16px;font-size:12px;font-weight:normal;color:#000;white-space:nowrap;text-align:right;overflow:hidden;overflow:hidden;">5.219,017</div>
<div style="position:absolute;left:95.5px;width:61.5px;top:344.34px;height:16px;line-height:16px;font-size:12px;font-weight:normal;color:#000;white-space:nowrap;text-align:left;overflow:hidden;overflow:hidden;">01/2020</div>
<div style="position:absolute;left:161.5px;width:317.5px;top:344.34px;height:16px;line-height:16px;font-size:12px;font-weight:normal;color:#000;white-space:nowrap;text-align:left;overflow:hidden;overflow:hidden;">KORIAN Schwelm 1045</div>
<div style="position:absolute;left:483.5px;width:317.5px;top:344.34px;height:16px;line-height:16px;font-size:12px;font-weight:normal;color:#000;white-space:nowrap;text-align:left;overflow:hidden;overflow:hidden;">CHEFS CULINAR GmbH &amp; Co. KG</div>
<div style="position:absolute;left:805.5px;width:91.5px;top:344.34px;height:16px;line-height:16px;font-size:12px;font-weight:normal;color:#000;white-space:nowrap;text-align:left;overflow:hidden;overflow:hidden;">505834006</div>
<div style="position:absolute;left:1090px;width:83px;top:344.34px;height:16px;line-height:16px;font-size:12px;font-weight:normal;color:#000;white-space:nowrap;text-align:right;overflow:hidden;overflow:hidden;">5.051,360</div>
<div style="position:absolute;left:95.5px;width:61.5px;top:365.34px;height:16px;line-height:16px;font-size:12px;font-weight:normal;color:#000;white-space:nowrap;text-align:left;overflow:hidden;overflow:hidden;">01/2020</div>
<div style="position:absolute;left:161.5px;width:317.5px;top:365.34px;height:16px;line-height:16px;font-size:12px;font-weight:normal;color:#000;white-space:nowrap;text-align:left;overflow:hidden;overflow:hidden;">KORIAN Wolfenbüttel 1025</div>
<div style="position:absolute;left:483.5px;width:317.5px;top:365.34px;height:16px;line-height:16px;font-size:12px;font-weight:normal;color:#000;white-space:nowrap;text-align:left;overflow:hidden;overflow:hidden;">CHEFS CULINAR GmbH &amp; Co. KG</div>
<div style="position:absolute;left:805.5px;width:91.5px;top:365.34px;height:16px;line-height:16px;font-size:12px;font-weight:normal;color:#000;white-space:nowrap;text-align:left;overflow:hidden;overflow:hidden;">80100843</div>
<div style="position:absolute;left:1090px;width:83px;top:365.34px;height:16px;line-height:16px;font-size:12px;font-weight:normal;color:#000;white-space:nowrap;text-align:right;overflow:hidden;overflow:hidden;">4.797,310</div>
<div style="position:absolute;left:95.5px;width:61.5px;top:386.34px;height:16px;line-height:16px;font-size:12px;font-weight:normal;color:#000;white-space:nowrap;text-align:left;overflow:hidden;overflow:hidden;">01/2020</div>
<div style="position:absolute;left:161.5px;width:317.5px;top:386.34px;height:16px;line-height:16px;font-size:12px;font-weight:normal;color:#000;white-space:nowrap;text-align:left;overflow:hidden;overflow:hidden;">KORIAN Plauen 3006</div>
<div style="position:absolute;left:483.5px;width:317.5px;top:386.34px;height:16px;line-height:16px;font-size:12px;font-weight:normal;color:#000;white-space:nowrap;text-align:left;overflow:hidden;overflow:hidden;">CHEFS CULINAR GmbH &amp; Co. KG</div>
<div style="position:absolute;left:805.5px;width:91.5px;top:386.34px;height:16px;line-height:16px;font-size:12px;font-weight:normal;color:#000;white-space:nowrap;text-align:left;overflow:hidden;overflow:hidden;">130457019</div>
<div style="position:absolute;left:1090px;width:83px;top:386.34px;height:16px;line-height:16px;font-size:12px;font-weight:normal;color:#000;white-space:nowrap;text-align:right;overflow:hidden;overflow:hidden;">4.491,046</div>
<div style="position:absolute;left:95.5px;width:61.5px;top:407.34px;height:16px;line-height:16px;font-size:12px;font-weight:normal;color:#000;white-space:nowrap;text-align:left;overflow:hidden;overflow:hidden;">01/2020</div>
<div style="position:absolute;left:161.5px;width:317.5px;top:407.34px;height:16px;line-height:16px;font-size:12px;font-weight:normal;color:#000;white-space:nowrap;text-align:left;overflow:hidden;overflow:hidden;">KORIAN Bremen 1078</div>
<div style="position:absolute;left:483.5px;width:317.5px;top:407.34px;height:16px;line-height:16px;font-size:12px;font-weight:normal;color:#000;white-space:nowrap;text-align:left;overflow:hidden;overflow:hidden;">CHEFS CULINAR GmbH &amp; Co. KG</div>
<div style="position:absolute;left:805.5px;width:91.5px;top:407.34px;height:16px;line-height:16px;font-size:12px;font-weight:normal;color:#000;white-space:nowrap;text-align:left;overflow:hidden;overflow:hidden;">80101079</div>
<div style="position:absolute;left:1090px;width:83px;top:407.34px;height:16px;line-height:16px;font-size:12px;font-weight:normal;color:#000;white-space:nowrap;text-align:right;overflow:hidden;overflow:hidden;">4.360,944</div>
<div style="position:absolute;left:95.5px;width:61.5px;top:428.34px;height:16px;line-height:16px;font-size:12px;font-weight:normal;color:#000;white-space:nowrap;text-align:left;overflow:hidden;overflow:hidden;">01/2020</div>
<div style="position:absolute;left:161.5px;width:317.5px;top:428.34px;height:16px;line-height:16px;font-size:12px;font-weight:normal;color:#000;white-space:nowrap;text-align:left;overflow:hidden;overflow:hidden;">KORIAN Geseke 1009</div>
<div style="position:absolute;left:483.5px;width:317.5px;top:428.34px;height:16px;line-height:16px;font-size:12px;font-weight:normal;color:#000;white-space:nowrap;text-align:left;overflow:hidden;overflow:hidden;">CHEFS CULINAR GmbH &amp; Co. KG</div>
<div style="position:absolute;left:805.5px;width:91.5px;top:428.34px;height:16px;line-height:16px;font-size:12px;font-weight:normal;color:#000;white-space:nowrap;text-align:left;overflow:hidden;overflow:hidden;">505961405</div>
<div style="position:absolute;left:1090px;width:83px;top:428.34px;height:16px;line-height:16px;font-size:12px;font-weight:normal;color:#000;white-space:nowrap;text-align:right;overflow:hidden;overflow:hidden;">4.240,503</div>
<div style="position:absolute;left:95.5px;width:61.5px;top:449.34px;height:16px;line-height:16px;font-size:12px;font-weight:normal;color:#000;white-space:nowrap;text-align:left;overflow:hidden;overflow:hidden;">01/2020</div>
<div style="position:absolute;left:161.5px;width:317.5px;top:449.34px;height:16px;line-height:16px;font-size:12px;font-weight:normal;color:#000;white-space:nowrap;text-align:left;overflow:hidden;overflow:hidden;">KORIAN Parsberg 3048</div>
<div style="position:absolute;left:483.5px;width:317.5px;top:449.34px;height:16px;line-height:16px;font-size:12px;font-weight:normal;color:#000;white-space:nowrap;text-align:left;overflow:hidden;overflow:hidden;">CHEFS CULINAR GmbH &amp; Co. KG</div>
<div style="position:absolute;left:805.5px;width:91.5px;top:449.34px;height:16px;line-height:16px;font-size:12px;font-weight:normal;color:#000;white-space:nowrap;text-align:left;overflow:hidden;overflow:hidden;">144794605</div>
<div style="position:absolute;left:1090px;width:83px;top:449.34px;height:16px;line-height:16px;font-size:12px;font-weight:normal;color:#000;white-space:nowrap;text-align:right;overflow:hidden;overflow:hidden;">4.122,960</div>
</div>
<div style="position:absolute;left:91px;top:277px;width:1px;height:21px;background:#dedede;"></div>
<div style="position:absolute;left:92px;top:277px;width:1px;height:21px;background:#fafafa;"></div>
<div style="position:absolute;left:157px;top:277px;width:1px;height:21px;background:#dedede;"></div>
<div style="position:absolute;left:158px;top:277px;width:1px;height:21px;background:#fafafa;"></div>
<div style="position:absolute;left:479px;top:277px;width:1px;height:21px;background:#dedede;"></div>
<div style="position:absolute;left:480px;top:277px;width:1px;height:21px;background:#fafafa;"></div>
<div style="position:absolute;left:801px;top:277px;width:1px;height:21px;background:#dedede;"></div>
<div style="position:absolute;left:802px;top:277px;width:1px;height:21px;background:#fafafa;"></div>
<div style="position:absolute;left:897px;top:277px;width:1px;height:21px;background:#dedede;"></div>
<div style="position:absolute;left:898px;top:277px;width:1px;height:21px;background:#fafafa;"></div>
<div style="position:absolute;left:993px;top:277px;width:1px;height:21px;background:#dedede;"></div>
<div style="position:absolute;left:994px;top:277px;width:1px;height:21px;background:#fafafa;"></div>
<div style="position:absolute;left:1089px;top:277px;width:1px;height:21px;background:#dedede;"></div>
<div style="position:absolute;left:1090px;top:277px;width:1px;height:21px;background:#fafafa;"></div>
<div style="position:absolute;left:1175px;top:277px;width:1px;height:21px;background:#dedede;"></div>
<div style="position:absolute;left:1176px;top:277px;width:1px;height:21px;background:#fafafa;"></div>
<div style="position:absolute;left:0;top:0;width:1298px;height:823px;will-change:transform;">
<div style="position:absolute;left:95px;width:62px;top:278.84px;height:16px;line-height:16px;font-size:12px;font-weight:normal;color:#000;white-space:nowrap;text-align:left;overflow:hidden;overflow:hidden;">Periode</div>
<div style="position:absolute;left:161px;width:318px;top:278.84px;height:16px;line-height:16px;font-size:12px;font-weight:normal;color:#000;white-space:nowrap;text-align:left;overflow:hidden;overflow:hidden;">Einkäufer</div>
<div style="position:absolute;left:483px;width:318px;top:278.84px;height:16px;line-height:16px;font-size:12px;font-weight:normal;color:#000;white-space:nowrap;text-align:left;overflow:hidden;overflow:hidden;">Lieferant</div>
<div style="position:absolute;left:805px;width:92px;top:278.84px;height:16px;line-height:16px;font-size:12px;font-weight:normal;color:#000;white-space:nowrap;text-align:left;overflow:hidden;overflow:hidden;">Kd.-Nr.</div>
<div style="position:absolute;left:901px;width:92px;top:278.84px;height:16px;line-height:16px;font-size:12px;font-weight:normal;color:#000;white-space:nowrap;text-align:left;overflow:hidden;overflow:hidden;">Warengruppe</div>
<div style="position:absolute;left:997px;width:92px;top:278.84px;height:16px;line-height:16px;font-size:12px;font-weight:normal;color:#000;white-space:nowrap;text-align:left;overflow:hidden;overflow:hidden;">Untergruppe</div>
<div style="position:absolute;left:1090px;width:83px;top:278.84px;height:16px;line-height:16px;font-size:12px;font-weight:normal;color:#000;white-space:nowrap;text-align:right;overflow:hidden;overflow:hidden;">bestellt</div>
<div style="position:absolute;left:1176px;width:83px;top:278.84px;height:16px;line-height:16px;font-size:12px;font-weight:normal;color:#000;white-space:nowrap;text-align:right;overflow:hidden;overflow:hidden;">geliefert</div>
</div>
<div style="position:absolute;left:1264px;top:277px;width:16px;height:184px;background:#f0f0f0;"></div>
<div style="position:absolute;left:1264px;top:294px;width:15px;height:11px;background:#cdcdcd;"></div>
<svg style="position:absolute;left:1266.5px;top:282px" width="10" height="8" viewBox="0 0 10 8"><path d="M2 6.7 L4.8 2.6 L7.6 6.7" stroke="#606060" stroke-width="1.8" fill="none"/></svg>
<svg style="position:absolute;left:1266.5px;top:448px" width="10" height="8" viewBox="0 0 10 8"><path d="M2 1.3 L4.8 5.4 L7.6 1.3" stroke="#606060" stroke-width="1.8" fill="none"/></svg>
<div style="position:absolute;left:117px;top:464.36px;line-height:13.5px;font-size:9.5px;font-weight:normal;color:#153566;white-space:nowrap;letter-spacing:0.5px;-webkit-text-stroke:0.45px #153566;">811 Datensätze</div>
<div style="position:absolute;left:245px;top:461px;width:1018px;height:16px;background:#f0f0f0;"></div>
<svg style="position:absolute;left:249px;top:463.7px" width="8" height="9" viewBox="0 0 8 9"><path d="M6.2 1 L2.2 4.5 L6.2 8" stroke="#c6c6c6" stroke-width="1.9" fill="none"/></svg>
<svg style="position:absolute;left:1250px;top:463.7px" width="8" height="9" viewBox="0 0 8 9"><path d="M1.5 1 L5.5 4.5 L1.5 8" stroke="#c6c6c6" stroke-width="1.9" fill="none"/></svg>
<div style="position:absolute;left:65px;top:487px;width:907px;height:25px;background:#edf7fd;"></div>
<div style="position:absolute;left:72px;top:489px;width:120px;height:20px;background:#e1e1e1;border:1px solid #adadad;"></div>
<div style="position:absolute;left:75px;top:490.84px;line-height:16px;font-size:12px;font-weight:normal;color:#000;white-space:nowrap;letter-spacing:0.25px;">Bestellungen</div>
<svg style="position:absolute;left:176.5px;top:498.0px" width="9" height="6" viewBox="0 0 9 6"><path d="M0.6 0.8 L4.5 4.7 L8.4 0.8" stroke="#3c3c3c" stroke-width="1.15" fill="none"/></svg>
<svg style="position:absolute;left:202.5px;top:491px" width="13" height="13" viewBox="0 0 13 13"><circle cx="6.5" cy="6.5" r="5" fill="#fff"/><path d="M2.96 10.04 A5 5 0 0 1 10.04 2.96" stroke="#6a6a6a" stroke-width="1.35" fill="none"/><path d="M10.04 2.96 A5 5 0 0 1 2.96 10.04" stroke="#e2e2e2" stroke-width="1.1" fill="none"/><circle cx="6.9" cy="7" r="2.1" fill="#000"/></svg>
<div style="position:absolute;left:218px;top:490.84px;line-height:16px;font-size:12px;font-weight:normal;color:#1f3864;white-space:nowrap;letter-spacing:0.15px;">Einzelbelege in gewählter Periode</div>
<svg style="position:absolute;left:408.5px;top:491px" width="13" height="13" viewBox="0 0 13 13"><circle cx="6.5" cy="6.5" r="5" fill="#fff"/><path d="M2.96 10.04 A5 5 0 0 1 10.04 2.96" stroke="#6a6a6a" stroke-width="1.35" fill="none"/><path d="M10.04 2.96 A5 5 0 0 1 2.96 10.04" stroke="#e2e2e2" stroke-width="1.1" fill="none"/></svg>
<div style="position:absolute;left:424px;top:490.84px;line-height:16px;font-size:12px;font-weight:normal;color:#1f3864;white-space:nowrap;letter-spacing:0.2px;">Diagramm anzeigen</div>
<div style="position:absolute;left:978px;top:488px;width:148px;height:23px;background:#cccccc;border:1px solid #bfbfbf;"></div>
<div style="position:absolute;left:978px;width:148px;text-align:center;top:491.64px;line-height:16px;font-size:12px;font-weight:normal;color:#838383;white-space:nowrap;">Aktualisieren</div>
<div style="position:absolute;left:1131px;top:488px;width:148px;height:23px;background:#e1e1e1;border:1px solid #adadad;"></div>
<div style="position:absolute;left:1131px;width:148px;text-align:center;top:491.64px;line-height:16px;font-size:12px;font-weight:normal;color:#000;white-space:nowrap;">Diagramme...</div>
<div style="position:absolute;left:65px;top:515px;width:1196px;height:21px;background:#f0f0f0;"></div>
<div style="position:absolute;left:65px;top:515px;width:1196px;height:1px;background:#f8f8f8;"></div>
<div style="position:absolute;left:65px;top:536px;width:1198px;height:1px;background:#e2e2e2;"></div>
<div style="position:absolute;left:1261px;top:515px;width:1px;height:21px;background:#e0e0e0;"></div>
<div style="position:absolute;left:0;top:537px;width:1298px;height:161px;overflow:hidden;">
<div style="position:absolute;left:65px;top:0px;width:19px;height:20px;background:#f0f0f0;"></div>
<div style="position:absolute;left:65px;top:0px;width:1px;height:20px;background:#d6d6d6;"></div>
<div style="position:absolute;left:65px;top:20px;width:19px;height:1px;background:#ffffff;"></div>
<div style="position:absolute;left:85px;top:0px;width:15px;height:20px;background:#efeefc;"></div>
<div style="position:absolute;left:85px;top:20px;width:15px;height:1px;background:#f1f1f1;"></div>
<div style="position:absolute;left:101px;top:0px;width:55px;height:20px;background:#efeefc;"></div>
<div style="position:absolute;left:101px;top:20px;width:55px;height:1px;background:#f1f1f1;"></div>
<div style="position:absolute;left:157px;top:0px;width:105px;height:20px;background:#efeefc;"></div>
<div style="position:absolute;left:157px;top:20px;width:105px;height:1px;background:#f1f1f1;"></div>
<div style="position:absolute;left:263px;top:0px;width:90px;height:20px;background:#efeefc;"></div>
<div style="position:absolute;left:263px;top:20px;width:90px;height:1px;background:#f1f1f1;"></div>
<div style="position:absolute;left:354px;top:0px;width:398px;height:20px;background:#efeefc;"></div>
<div style="position:absolute;left:354px;top:20px;width:398px;height:1px;background:#f1f1f1;"></div>
<div style="position:absolute;left:753px;top:0px;width:326px;height:20px;background:#efeefc;"></div>
<div style="position:absolute;left:753px;top:20px;width:326px;height:1px;background:#f1f1f1;"></div>
<div style="position:absolute;left:1080px;top:0px;width:95px;height:20px;background:#efeefc;"></div>
<div style="position:absolute;left:1080px;top:20px;width:95px;height:1px;background:#f1f1f1;"></div>
<div style="position:absolute;left:1176px;top:0px;width:85px;height:20px;background:#efeefc;"></div>
<div style="position:absolute;left:1176px;top:20px;width:85px;height:1px;background:#f1f1f1;"></div>
<div style="position:absolute;left:84px;top:0px;width:1px;height:21px;background:#ebebeb;"></div>
<div style="position:absolute;left:100px;top:0px;width:1px;height:21px;background:#ebebeb;"></div>
<div style="position:absolute;left:156px;top:0px;width:1px;height:21px;background:#ebebeb;"></div>
<div style="position:absolute;left:262px;top:0px;width:1px;height:21px;background:#ebebeb;"></div>
<div style="position:absolute;left:353px;top:0px;width:1px;height:21px;background:#ebebeb;"></div>
<div style="position:absolute;left:752px;top:0px;width:1px;height:21px;background:#ebebeb;"></div>
<div style="position:absolute;left:1079px;top:0px;width:1px;height:21px;background:#ebebeb;"></div>
<div style="position:absolute;left:1175px;top:0px;width:1px;height:21px;background:#ebebeb;"></div>
<div style="position:absolute;left:68px;top:0.80px;line-height:16px;font-size:12px;color:#000;">1</div>
<div style="position:absolute;left:65px;top:21px;width:19px;height:20px;background:#f0f0f0;"></div>
<div style="position:absolute;left:65px;top:21px;width:19px;height:1px;background:#fbfbfb;"></div>
<div style="position:absolute;left:65px;top:21px;width:1px;height:20px;background:#fbfbfb;"></div>
<div style="position:absolute;left:65px;top:41px;width:19px;height:1px;background:#d9d9d9;"></div>
<div style="position:absolute;left:85px;top:21px;width:15px;height:20px;background:#edf8fd;"></div>
<div style="position:absolute;left:85px;top:41px;width:15px;height:1px;background:#f1f1f1;"></div>
<div style="position:absolute;left:101px;top:21px;width:55px;height:20px;background:#edf8fd;"></div>
<div style="position:absolute;left:101px;top:41px;width:55px;height:1px;background:#f1f1f1;"></div>
<div style="position:absolute;left:157px;top:21px;width:105px;height:20px;background:#edf8fd;"></div>
<div style="position:absolute;left:157px;top:41px;width:105px;height:1px;background:#f1f1f1;"></div>
<div style="position:absolute;left:263px;top:21px;width:90px;height:20px;background:#edf8fd;"></div>
<div style="position:absolute;left:263px;top:41px;width:90px;height:1px;background:#f1f1f1;"></div>
<div style="position:absolute;left:354px;top:21px;width:398px;height:20px;background:#edf8fd;"></div>
<div style="position:absolute;left:354px;top:41px;width:398px;height:1px;background:#f1f1f1;"></div>
<div style="position:absolute;left:753px;top:21px;width:326px;height:20px;background:#edf8fd;"></div>
<div style="position:absolute;left:753px;top:41px;width:326px;height:1px;background:#f1f1f1;"></div>
<div style="position:absolute;left:1080px;top:21px;width:95px;height:20px;background:#edf8fd;"></div>
<div style="position:absolute;left:1080px;top:41px;width:95px;height:1px;background:#f1f1f1;"></div>
<div style="position:absolute;left:1176px;top:21px;width:85px;height:20px;background:#edf8fd;"></div>
<div style="position:absolute;left:1176px;top:41px;width:85px;height:1px;background:#f1f1f1;"></div>
<div style="position:absolute;left:84px;top:21px;width:1px;height:21px;background:#ebebeb;"></div>
<div style="position:absolute;left:100px;top:21px;width:1px;height:21px;background:#ebebeb;"></div>
<div style="position:absolute;left:156px;top:21px;width:1px;height:21px;background:#ebebeb;"></div>
<div style="position:absolute;left:262px;top:21px;width:1px;height:21px;background:#ebebeb;"></div>
<div style="position:absolute;left:353px;top:21px;width:1px;height:21px;background:#ebebeb;"></div>
<div style="position:absolute;left:752px;top:21px;width:1px;height:21px;background:#ebebeb;"></div>
<div style="position:absolute;left:1079px;top:21px;width:1px;height:21px;background:#ebebeb;"></div>
<div style="position:absolute;left:1175px;top:21px;width:1px;height:21px;background:#ebebeb;"></div>
<div style="position:absolute;left:68px;top:21.80px;line-height:16px;font-size:12px;color:#000;">2</div>
<div style="position:absolute;left:65px;top:42px;width:19px;height:20px;background:#f0f0f0;"></div>
<div style="position:absolute;left:65px;top:42px;width:19px;height:1px;background:#fbfbfb;"></div>
<div style="position:absolute;left:65px;top:42px;width:1px;height:20px;background:#fbfbfb;"></div>
<div style="position:absolute;left:65px;top:62px;width:19px;height:1px;background:#d9d9d9;"></div>
<div style="position:absolute;left:85px;top:42px;width:15px;height:20px;background:#ffffff;"></div>
<div style="position:absolute;left:85px;top:62px;width:15px;height:1px;background:#f1f1f1;"></div>
<div style="position:absolute;left:101px;top:42px;width:55px;height:20px;background:#ffffff;"></div>
<div style="position:absolute;left:101px;top:62px;width:55px;height:1px;background:#f1f1f1;"></div>
<div style="position:absolute;left:157px;top:42px;width:105px;height:20px;background:#ffffff;"></div>
<div style="position:absolute;left:157px;top:62px;width:105px;height:1px;background:#f1f1f1;"></div>
<div style="position:absolute;left:263px;top:42px;width:90px;height:20px;background:#ffffff;"></div>
<div style="position:absolute;left:263px;top:62px;width:90px;height:1px;background:#f1f1f1;"></div>
<div style="position:absolute;left:354px;top:42px;width:398px;height:20px;background:#ffffff;"></div>
<div style="position:absolute;left:354px;top:62px;width:398px;height:1px;background:#f1f1f1;"></div>
<div style="position:absolute;left:753px;top:42px;width:326px;height:20px;background:#ffffff;"></div>
<div style="position:absolute;left:753px;top:62px;width:326px;height:1px;background:#f1f1f1;"></div>
<div style="position:absolute;left:1080px;top:42px;width:95px;height:20px;background:#ffffff;"></div>
<div style="position:absolute;left:1080px;top:62px;width:95px;height:1px;background:#f1f1f1;"></div>
<div style="position:absolute;left:1176px;top:42px;width:85px;height:20px;background:#ffffff;"></div>
<div style="position:absolute;left:1176px;top:62px;width:85px;height:1px;background:#f1f1f1;"></div>
<div style="position:absolute;left:84px;top:42px;width:1px;height:21px;background:#ebebeb;"></div>
<div style="position:absolute;left:100px;top:42px;width:1px;height:21px;background:#ebebeb;"></div>
<div style="position:absolute;left:156px;top:42px;width:1px;height:21px;background:#ebebeb;"></div>
<div style="position:absolute;left:262px;top:42px;width:1px;height:21px;background:#ebebeb;"></div>
<div style="position:absolute;left:353px;top:42px;width:1px;height:21px;background:#ebebeb;"></div>
<div style="position:absolute;left:752px;top:42px;width:1px;height:21px;background:#ebebeb;"></div>
<div style="position:absolute;left:1079px;top:42px;width:1px;height:21px;background:#ebebeb;"></div>
<div style="position:absolute;left:1175px;top:42px;width:1px;height:21px;background:#ebebeb;"></div>
<div style="position:absolute;left:68px;top:42.80px;line-height:16px;font-size:12px;color:#000;">3</div>
<div style="position:absolute;left:65px;top:63px;width:19px;height:20px;background:#f0f0f0;"></div>
<div style="position:absolute;left:65px;top:63px;width:19px;height:1px;background:#fbfbfb;"></div>
<div style="position:absolute;left:65px;top:63px;width:1px;height:20px;background:#fbfbfb;"></div>
<div style="position:absolute;left:65px;top:83px;width:19px;height:1px;background:#d9d9d9;"></div>
<div style="position:absolute;left:85px;top:63px;width:15px;height:20px;background:#edf8fd;"></div>
<div style="position:absolute;left:85px;top:83px;width:15px;height:1px;background:#f1f1f1;"></div>
<div style="position:absolute;left:101px;top:63px;width:55px;height:20px;background:#edf8fd;"></div>
<div style="position:absolute;left:101px;top:83px;width:55px;height:1px;background:#f1f1f1;"></div>
<div style="position:absolute;left:157px;top:63px;width:105px;height:20px;background:#edf8fd;"></div>
<div style="position:absolute;left:157px;top:83px;width:105px;height:1px;background:#f1f1f1;"></div>
<div style="position:absolute;left:263px;top:63px;width:90px;height:20px;background:#edf8fd;"></div>
<div style="position:absolute;left:263px;top:83px;width:90px;height:1px;background:#f1f1f1;"></div>
<div style="position:absolute;left:354px;top:63px;width:398px;height:20px;background:#edf8fd;"></div>
<div style="position:absolute;left:354px;top:83px;width:398px;height:1px;background:#f1f1f1;"></div>
<div style="position:absolute;left:753px;top:63px;width:326px;height:20px;background:#edf8fd;"></div>
<div style="position:absolute;left:753px;top:83px;width:326px;height:1px;background:#f1f1f1;"></div>
<div style="position:absolute;left:1080px;top:63px;width:95px;height:20px;background:#edf8fd;"></div>
<div style="position:absolute;left:1080px;top:83px;width:95px;height:1px;background:#f1f1f1;"></div>
<div style="position:absolute;left:1176px;top:63px;width:85px;height:20px;background:#edf8fd;"></div>
<div style="position:absolute;left:1176px;top:83px;width:85px;height:1px;background:#f1f1f1;"></div>
<div style="position:absolute;left:84px;top:63px;width:1px;height:21px;background:#ebebeb;"></div>
<div style="position:absolute;left:100px;top:63px;width:1px;height:21px;background:#ebebeb;"></div>
<div style="position:absolute;left:156px;top:63px;width:1px;height:21px;background:#ebebeb;"></div>
<div style="position:absolute;left:262px;top:63px;width:1px;height:21px;background:#ebebeb;"></div>
<div style="position:absolute;left:353px;top:63px;width:1px;height:21px;background:#ebebeb;"></div>
<div style="position:absolute;left:752px;top:63px;width:1px;height:21px;background:#ebebeb;"></div>
<div style="position:absolute;left:1079px;top:63px;width:1px;height:21px;background:#ebebeb;"></div>
<div style="position:absolute;left:1175px;top:63px;width:1px;height:21px;background:#ebebeb;"></div>
<div style="position:absolute;left:68px;top:63.80px;line-height:16px;font-size:12px;color:#000;">4</div>
<div style="position:absolute;left:65px;top:84px;width:19px;height:20px;background:#f0f0f0;"></div>
<div style="position:absolute;left:65px;top:84px;width:19px;height:1px;background:#fbfbfb;"></div>
<div style="position:absolute;left:65px;top:84px;width:1px;height:20px;background:#fbfbfb;"></div>
<div style="position:absolute;left:65px;top:104px;width:19px;height:1px;background:#d9d9d9;"></div>
<div style="position:absolute;left:85px;top:84px;width:15px;height:20px;background:#ffffff;"></div>
<div style="position:absolute;left:85px;top:104px;width:15px;height:1px;background:#f1f1f1;"></div>
<div style="position:absolute;left:101px;top:84px;width:55px;height:20px;background:#ffffff;"></div>
<div style="position:absolute;left:101px;top:104px;width:55px;height:1px;background:#f1f1f1;"></div>
<div style="position:absolute;left:157px;top:84px;width:105px;height:20px;background:#ffffff;"></div>
<div style="position:absolute;left:157px;top:104px;width:105px;height:1px;background:#f1f1f1;"></div>
<div style="position:absolute;left:263px;top:84px;width:90px;height:20px;background:#ffffff;"></div>
<div style="position:absolute;left:263px;top:104px;width:90px;height:1px;background:#f1f1f1;"></div>
<div style="position:absolute;left:354px;top:84px;width:398px;height:20px;background:#ffffff;"></div>
<div style="position:absolute;left:354px;top:104px;width:398px;height:1px;background:#f1f1f1;"></div>
<div style="position:absolute;left:753px;top:84px;width:326px;height:20px;background:#ffffff;"></div>
<div style="position:absolute;left:753px;top:104px;width:326px;height:1px;background:#f1f1f1;"></div>
<div style="position:absolute;left:1080px;top:84px;width:95px;height:20px;background:#ffffff;"></div>
<div style="position:absolute;left:1080px;top:104px;width:95px;height:1px;background:#f1f1f1;"></div>
<div style="position:absolute;left:1176px;top:84px;width:85px;height:20px;background:#ffffff;"></div>
<div style="position:absolute;left:1176px;top:104px;width:85px;height:1px;background:#f1f1f1;"></div>
<div style="position:absolute;left:84px;top:84px;width:1px;height:21px;background:#ebebeb;"></div>
<div style="position:absolute;left:100px;top:84px;width:1px;height:21px;background:#ebebeb;"></div>
<div style="position:absolute;left:156px;top:84px;width:1px;height:21px;background:#ebebeb;"></div>
<div style="position:absolute;left:262px;top:84px;width:1px;height:21px;background:#ebebeb;"></div>
<div style="position:absolute;left:353px;top:84px;width:1px;height:21px;background:#ebebeb;"></div>
<div style="position:absolute;left:752px;top:84px;width:1px;height:21px;background:#ebebeb;"></div>
<div style="position:absolute;left:1079px;top:84px;width:1px;height:21px;background:#ebebeb;"></div>
<div style="position:absolute;left:1175px;top:84px;width:1px;height:21px;background:#ebebeb;"></div>
<div style="position:absolute;left:68px;top:84.80px;line-height:16px;font-size:12px;color:#000;">5</div>
<div style="position:absolute;left:65px;top:105px;width:19px;height:20px;background:#f0f0f0;"></div>
<div style="position:absolute;left:65px;top:105px;width:19px;height:1px;background:#fbfbfb;"></div>
<div style="position:absolute;left:65px;top:105px;width:1px;height:20px;background:#fbfbfb;"></div>
<div style="position:absolute;left:65px;top:125px;width:19px;height:1px;background:#d9d9d9;"></div>
<div style="position:absolute;left:85px;top:105px;width:15px;height:20px;background:#edf8fd;"></div>
<div style="position:absolute;left:85px;top:125px;width:15px;height:1px;background:#f1f1f1;"></div>
<div style="position:absolute;left:101px;top:105px;width:55px;height:20px;background:#edf8fd;"></div>
<div style="position:absolute;left:101px;top:125px;width:55px;height:1px;background:#f1f1f1;"></div>
<div style="position:absolute;left:157px;top:105px;width:105px;height:20px;background:#edf8fd;"></div>
<div style="position:absolute;left:157px;top:125px;width:105px;height:1px;background:#f1f1f1;"></div>
<div style="position:absolute;left:263px;top:105px;width:90px;height:20px;background:#edf8fd;"></div>
<div style="position:absolute;left:263px;top:125px;width:90px;height:1px;background:#f1f1f1;"></div>
<div style="position:absolute;left:354px;top:105px;width:398px;height:20px;background:#edf8fd;"></div>
<div style="position:absolute;left:354px;top:125px;width:398px;height:1px;background:#f1f1f1;"></div>
<div style="position:absolute;left:753px;top:105px;width:326px;height:20px;background:#edf8fd;"></div>
<div style="position:absolute;left:753px;top:125px;width:326px;height:1px;background:#f1f1f1;"></div>
<div style="position:absolute;left:1080px;top:105px;width:95px;height:20px;background:#edf8fd;"></div>
<div style="position:absolute;left:1080px;top:125px;width:95px;height:1px;background:#f1f1f1;"></div>
<div style="position:absolute;left:1176px;top:105px;width:85px;height:20px;background:#edf8fd;"></div>
<div style="position:absolute;left:1176px;top:125px;width:85px;height:1px;background:#f1f1f1;"></div>
<div style="position:absolute;left:84px;top:105px;width:1px;height:21px;background:#ebebeb;"></div>
<div style="position:absolute;left:100px;top:105px;width:1px;height:21px;background:#ebebeb;"></div>
<div style="position:absolute;left:156px;top:105px;width:1px;height:21px;background:#ebebeb;"></div>
<div style="position:absolute;left:262px;top:105px;width:1px;height:21px;background:#ebebeb;"></div>
<div style="position:absolute;left:353px;top:105px;width:1px;height:21px;background:#ebebeb;"></div>
<div style="position:absolute;left:752px;top:105px;width:1px;height:21px;background:#ebebeb;"></div>
<div style="position:absolute;left:1079px;top:105px;width:1px;height:21px;background:#ebebeb;"></div>
<div style="position:absolute;left:1175px;top:105px;width:1px;height:21px;background:#ebebeb;"></div>
<div style="position:absolute;left:68px;top:105.80px;line-height:16px;font-size:12px;color:#000;">6</div>
<div style="position:absolute;left:65px;top:126px;width:19px;height:20px;background:#f0f0f0;"></div>
<div style="position:absolute;left:65px;top:126px;width:19px;height:1px;background:#fbfbfb;"></div>
<div style="position:absolute;left:65px;top:126px;width:1px;height:20px;background:#fbfbfb;"></div>
<div style="position:absolute;left:65px;top:146px;width:19px;height:1px;background:#d9d9d9;"></div>
<div style="position:absolute;left:85px;top:126px;width:15px;height:20px;background:#ffffff;"></div>
<div style="position:absolute;left:85px;top:146px;width:15px;height:1px;background:#f1f1f1;"></div>
<div style="position:absolute;left:101px;top:126px;width:55px;height:20px;background:#ffffff;"></div>
<div style="position:absolute;left:101px;top:146px;width:55px;height:1px;background:#f1f1f1;"></div>
<div style="position:absolute;left:157px;top:126px;width:105px;height:20px;background:#ffffff;"></div>
<div style="position:absolute;left:157px;top:146px;width:105px;height:1px;background:#f1f1f1;"></div>
<div style="position:absolute;left:263px;top:126px;width:90px;height:20px;background:#ffffff;"></div>
<div style="position:absolute;left:263px;top:146px;width:90px;height:1px;background:#f1f1f1;"></div>
<div style="position:absolute;left:354px;top:126px;width:398px;height:20px;background:#ffffff;"></div>
<div style="position:absolute;left:354px;top:146px;width:398px;height:1px;background:#f1f1f1;"></div>
<div style="position:absolute;left:753px;top:126px;width:326px;height:20px;background:#ffffff;"></div>
<div style="position:absolute;left:753px;top:146px;width:326px;height:1px;background:#f1f1f1;"></div>
<div style="position:absolute;left:1080px;top:126px;width:95px;height:20px;background:#ffffff;"></div>
<div style="position:absolute;left:1080px;top:146px;width:95px;height:1px;background:#f1f1f1;"></div>
<div style="position:absolute;left:1176px;top:126px;width:85px;height:20px;background:#ffffff;"></div>
<div style="position:absolute;left:1176px;top:146px;width:85px;height:1px;background:#f1f1f1;"></div>
<div style="position:absolute;left:84px;top:126px;width:1px;height:21px;background:#ebebeb;"></div>
<div style="position:absolute;left:100px;top:126px;width:1px;height:21px;background:#ebebeb;"></div>
<div style="position:absolute;left:156px;top:126px;width:1px;height:21px;background:#ebebeb;"></div>
<div style="position:absolute;left:262px;top:126px;width:1px;height:21px;background:#ebebeb;"></div>
<div style="position:absolute;left:353px;top:126px;width:1px;height:21px;background:#ebebeb;"></div>
<div style="position:absolute;left:752px;top:126px;width:1px;height:21px;background:#ebebeb;"></div>
<div style="position:absolute;left:1079px;top:126px;width:1px;height:21px;background:#ebebeb;"></div>
<div style="position:absolute;left:1175px;top:126px;width:1px;height:21px;background:#ebebeb;"></div>
<div style="position:absolute;left:68px;top:126.80px;line-height:16px;font-size:12px;color:#000;">7</div>
<div style="position:absolute;left:65px;top:147px;width:19px;height:20px;background:#f0f0f0;"></div>
<div style="position:absolute;left:65px;top:147px;width:19px;height:1px;background:#fbfbfb;"></div>
<div style="position:absolute;left:65px;top:147px;width:1px;height:20px;background:#fbfbfb;"></div>
<div style="position:absolute;left:65px;top:167px;width:19px;height:1px;background:#d9d9d9;"></div>
<div style="position:absolute;left:85px;top:147px;width:15px;height:20px;background:#edf8fd;"></div>
<div style="position:absolute;left:85px;top:167px;width:15px;height:1px;background:#f1f1f1;"></div>
<div style="position:absolute;left:101px;top:147px;width:55px;height:20px;background:#edf8fd;"></div>
<div style="position:absolute;left:101px;top:167px;width:55px;height:1px;background:#f1f1f1;"></div>
<div style="position:absolute;left:157px;top:147px;width:105px;height:20px;background:#edf8fd;"></div>
<div style="position:absolute;left:157px;top:167px;width:105px;height:1px;background:#f1f1f1;"></div>
<div style="position:absolute;left:263px;top:147px;width:90px;height:20px;background:#edf8fd;"></div>
<div style="position:absolute;left:263px;top:167px;width:90px;height:1px;background:#f1f1f1;"></div>
<div style="position:absolute;left:354px;top:147px;width:398px;height:20px;background:#edf8fd;"></div>
<div style="position:absolute;left:354px;top:167px;width:398px;height:1px;background:#f1f1f1;"></div>
<div style="position:absolute;left:753px;top:147px;width:326px;height:20px;background:#edf8fd;"></div>
<div style="position:absolute;left:753px;top:167px;width:326px;height:1px;background:#f1f1f1;"></div>
<div style="position:absolute;left:1080px;top:147px;width:95px;height:20px;background:#edf8fd;"></div>
<div style="position:absolute;left:1080px;top:167px;width:95px;height:1px;background:#f1f1f1;"></div>
<div style="position:absolute;left:1176px;top:147px;width:85px;height:20px;background:#edf8fd;"></div>
<div style="position:absolute;left:1176px;top:167px;width:85px;height:1px;background:#f1f1f1;"></div>
<div style="position:absolute;left:84px;top:147px;width:1px;height:21px;background:#ebebeb;"></div>
<div style="position:absolute;left:100px;top:147px;width:1px;height:21px;background:#ebebeb;"></div>
<div style="position:absolute;left:156px;top:147px;width:1px;height:21px;background:#ebebeb;"></div>
<div style="position:absolute;left:262px;top:147px;width:1px;height:21px;background:#ebebeb;"></div>
<div style="position:absolute;left:353px;top:147px;width:1px;height:21px;background:#ebebeb;"></div>
<div style="position:absolute;left:752px;top:147px;width:1px;height:21px;background:#ebebeb;"></div>
<div style="position:absolute;left:1079px;top:147px;width:1px;height:21px;background:#ebebeb;"></div>
<div style="position:absolute;left:1175px;top:147px;width:1px;height:21px;background:#ebebeb;"></div>
<div style="position:absolute;left:68px;top:147.80px;line-height:16px;font-size:12px;color:#000;">8</div>
</div>
<div style="position:absolute;left:0;top:0;width:1298px;height:698px;overflow:hidden;will-change:transform;">
<div style="position:absolute;left:101px;width:53px;top:540.34px;height:16px;line-height:16px;font-size:12px;font-weight:bold;color:#000;white-space:nowrap;text-align:right;overflow:hidden;overflow:hidden;">151208..</div>
<div style="position:absolute;left:160.5px;width:101.5px;top:540.34px;height:16px;line-height:16px;font-size:12px;font-weight:bold;color:#000;white-space:nowrap;text-align:left;overflow:hidden;overflow:hidden;">01.01.2020 13:23</div>
<div style="position:absolute;left:266.5px;width:86.5px;top:540.34px;height:16px;line-height:16px;font-size:12px;font-weight:bold;color:#000;white-space:nowrap;text-align:left;overflow:hidden;overflow:hidden;letter-spacing:-0.45px;">CURANUM AG</div>
<div style="position:absolute;left:357.5px;width:394.5px;top:540.34px;height:16px;line-height:16px;font-size:12px;font-weight:bold;color:#000;white-space:nowrap;text-align:left;overflow:hidden;overflow:hidden;letter-spacing:-0.45px;">CHEFS CULINAR GmbH &amp; Co. KG</div>
<div style="position:absolute;left:756.5px;width:322.5px;top:540.34px;height:16px;line-height:16px;font-size:12px;font-weight:bold;color:#000;white-space:nowrap;text-align:left;overflow:hidden;overflow:hidden;letter-spacing:-0.45px;">KORIAN Frechen 1068</div>
<div style="position:absolute;left:1083.5px;width:91.5px;top:540.34px;height:16px;line-height:16px;font-size:12px;font-weight:bold;color:#000;white-space:nowrap;text-align:left;overflow:hidden;overflow:hidden;">505023003</div>
<div style="position:absolute;left:1176px;width:83px;top:540.34px;height:16px;line-height:16px;font-size:12px;font-weight:bold;color:#000;white-space:nowrap;text-align:right;overflow:hidden;overflow:hidden;">1.189,497</div>
<div style="position:absolute;left:101px;width:53px;top:561.34px;height:16px;line-height:16px;font-size:12px;font-weight:normal;color:#000;white-space:nowrap;text-align:right;overflow:hidden;overflow:hidden;">151210..</div>
<div style="position:absolute;left:160.5px;width:101.5px;top:561.34px;height:16px;line-height:16px;font-size:12px;font-weight:normal;color:#000;white-space:nowrap;text-align:left;overflow:hidden;overflow:hidden;">01.01.2020 14:08</div>
<div style="position:absolute;left:266.5px;width:86.5px;top:561.34px;height:16px;line-height:16px;font-size:12px;font-weight:normal;color:#000;white-space:nowrap;text-align:left;overflow:hidden;overflow:hidden;">CURANUM AG</div>
<div style="position:absolute;left:357.5px;width:394.5px;top:561.34px;height:16px;line-height:16px;font-size:12px;font-weight:normal;color:#000;white-space:nowrap;text-align:left;overflow:hidden;overflow:hidden;">CHEFS CULINAR GmbH &amp; Co. KG</div>
<div style="position:absolute;left:756.5px;width:322.5px;top:561.34px;height:16px;line-height:16px;font-size:12px;font-weight:normal;color:#000;white-space:nowrap;text-align:left;overflow:hidden;overflow:hidden;">KORIAN Frechen 1068</div>
<div style="position:absolute;left:1083.5px;width:91.5px;top:561.34px;height:16px;line-height:16px;font-size:12px;font-weight:normal;color:#000;white-space:nowrap;text-align:left;overflow:hidden;overflow:hidden;">505023003</div>
<div style="position:absolute;left:1176px;width:83px;top:561.34px;height:16px;line-height:16px;font-size:12px;font-weight:normal;color:#000;white-space:nowrap;text-align:right;overflow:hidden;overflow:hidden;">1.742,948</div>
<div style="position:absolute;left:101px;width:53px;top:582.34px;height:16px;line-height:16px;font-size:12px;font-weight:normal;color:#000;white-space:nowrap;text-align:right;overflow:hidden;overflow:hidden;">151278..</div>
<div style="position:absolute;left:160.5px;width:101.5px;top:582.34px;height:16px;line-height:16px;font-size:12px;font-weight:normal;color:#000;white-space:nowrap;text-align:left;overflow:hidden;overflow:hidden;">02.01.2020 15:07</div>
<div style="position:absolute;left:266.5px;width:86.5px;top:582.34px;height:16px;line-height:16px;font-size:12px;font-weight:normal;color:#000;white-space:nowrap;text-align:left;overflow:hidden;overflow:hidden;">CURANUM AG</div>
<div style="position:absolute;left:357.5px;width:394.5px;top:582.34px;height:16px;line-height:16px;font-size:12px;font-weight:normal;color:#000;white-space:nowrap;text-align:left;overflow:hidden;overflow:hidden;">CHEFS CULINAR GmbH &amp; Co. KG</div>
<div style="position:absolute;left:756.5px;width:322.5px;top:582.34px;height:16px;line-height:16px;font-size:12px;font-weight:normal;color:#000;white-space:nowrap;text-align:left;overflow:hidden;overflow:hidden;">KORIAN Frechen 1068</div>
<div style="position:absolute;left:1083.5px;width:91.5px;top:582.34px;height:16px;line-height:16px;font-size:12px;font-weight:normal;color:#000;white-space:nowrap;text-align:left;overflow:hidden;overflow:hidden;">505023003</div>
<div style="position:absolute;left:1176px;width:83px;top:582.34px;height:16px;line-height:16px;font-size:12px;font-weight:normal;color:#000;white-space:nowrap;text-align:right;overflow:hidden;overflow:hidden;">59,760</div>
<div style="position:absolute;left:101px;width:53px;top:603.34px;height:16px;line-height:16px;font-size:12px;font-weight:normal;color:#000;white-space:nowrap;text-align:right;overflow:hidden;overflow:hidden;">151325..</div>
<div style="position:absolute;left:160.5px;width:101.5px;top:603.34px;height:16px;line-height:16px;font-size:12px;font-weight:normal;color:#000;white-space:nowrap;text-align:left;overflow:hidden;overflow:hidden;">03.01.2020 12:11</div>
<div style="position:absolute;left:266.5px;width:86.5px;top:603.34px;height:16px;line-height:16px;font-size:12px;font-weight:normal;color:#000;white-space:nowrap;text-align:left;overflow:hidden;overflow:hidden;">CURANUM AG</div>
<div style="position:absolute;left:357.5px;width:394.5px;top:603.34px;height:16px;line-height:16px;font-size:12px;font-weight:normal;color:#000;white-space:nowrap;text-align:left;overflow:hidden;overflow:hidden;">CHEFS CULINAR GmbH &amp; Co. KG</div>
<div style="position:absolute;left:756.5px;width:322.5px;top:603.34px;height:16px;line-height:16px;font-size:12px;font-weight:normal;color:#000;white-space:nowrap;text-align:left;overflow:hidden;overflow:hidden;">KORIAN Frechen 1068</div>
<div style="position:absolute;left:1083.5px;width:91.5px;top:603.34px;height:16px;line-height:16px;font-size:12px;font-weight:normal;color:#000;white-space:nowrap;text-align:left;overflow:hidden;overflow:hidden;">505023003</div>
<div style="position:absolute;left:1176px;width:83px;top:603.34px;height:16px;line-height:16px;font-size:12px;font-weight:normal;color:#000;white-space:nowrap;text-align:right;overflow:hidden;overflow:hidden;">879,956</div>
<div style="position:absolute;left:101px;width:53px;top:624.34px;height:16px;line-height:16px;font-size:12px;font-weight:normal;color:#000;white-space:nowrap;text-align:right;overflow:hidden;overflow:hidden;">151326..</div>
<div style="position:absolute;left:160.5px;width:101.5px;top:624.34px;height:16px;line-height:16px;font-size:12px;font-weight:normal;color:#000;white-space:nowrap;text-align:left;overflow:hidden;overflow:hidden;">03.01.2020 12:26</div>
<div style="position:absolute;left:266.5px;width:86.5px;top:624.34px;height:16px;line-height:16px;font-size:12px;font-weight:normal;color:#000;white-space:nowrap;text-align:left;overflow:hidden;overflow:hidden;">CURANUM AG</div>
<div style="position:absolute;left:357.5px;width:394.5px;top:624.34px;height:16px;line-height:16px;font-size:12px;font-weight:normal;color:#000;white-space:nowrap;text-align:left;overflow:hidden;overflow:hidden;">CHEFS CULINAR GmbH &amp; Co. KG</div>
<div style="position:absolute;left:756.5px;width:322.5px;top:624.34px;height:16px;line-height:16px;font-size:12px;font-weight:normal;color:#000;white-space:nowrap;text-align:left;overflow:hidden;overflow:hidden;">KORIAN Frechen 1068</div>
<div style="position:absolute;left:1083.5px;width:91.5px;top:624.34px;height:16px;line-height:16px;font-size:12px;font-weight:normal;color:#000;white-space:nowrap;text-align:left;overflow:hidden;overflow:hidden;">505023003</div>
<div style="position:absolute;left:1176px;width:83px;top:624.34px;height:16px;line-height:16px;font-size:12px;font-weight:normal;color:#000;white-space:nowrap;text-align:right;overflow:hidden;overflow:hidden;">184,200</div>
<div style="position:absolute;left:101px;width:53px;top:645.34px;height:16px;line-height:16px;font-size:12px;font-weight:normal;color:#000;white-space:nowrap;text-align:right;overflow:hidden;overflow:hidden;">151350..</div>
<div style="position:absolute;left:160.5px;width:101.5px;top:645.34px;height:16px;line-height:16px;font-size:12px;font-weight:normal;color:#000;white-space:nowrap;text-align:left;overflow:hidden;overflow:hidden;">04.01.2020 14:12</div>
<div style="position:absolute;left:266.5px;width:86.5px;top:645.34px;height:16px;line-height:16px;font-size:12px;font-weight:normal;color:#000;white-space:nowrap;text-align:left;overflow:hidden;overflow:hidden;">CURANUM AG</div>
<div style="position:absolute;left:357.5px;width:394.5px;top:645.34px;height:16px;line-height:16px;font-size:12px;font-weight:normal;color:#000;white-space:nowrap;text-align:left;overflow:hidden;overflow:hidden;">CHEFS CULINAR GmbH &amp; Co. KG</div>
<div style="position:absolute;left:756.5px;width:322.5px;top:645.34px;height:16px;line-height:16px;font-size:12px;font-weight:normal;color:#000;white-space:nowrap;text-align:left;overflow:hidden;overflow:hidden;">KORIAN Frechen 1068</div>
<div style="position:absolute;left:1083.5px;width:91.5px;top:645.34px;height:16px;line-height:16px;font-size:12px;font-weight:normal;color:#000;white-space:nowrap;text-align:left;overflow:hidden;overflow:hidden;">505023003</div>
<div style="position:absolute;left:1176px;width:83px;top:645.34px;height:16px;line-height:16px;font-size:12px;font-weight:normal;color:#000;white-space:nowrap;text-align:right;overflow:hidden;overflow:hidden;">718,220</div>
<div style="position:absolute;left:101px;width:53px;top:666.34px;height:16px;line-height:16px;font-size:12px;font-weight:normal;color:#000;white-space:nowrap;text-align:right;overflow:hidden;overflow:hidden;">151359..</div>
<div style="position:absolute;left:160.5px;width:101.5px;top:666.34px;height:16px;line-height:16px;font-size:12px;font-weight:normal;color:#000;white-space:nowrap;text-align:left;overflow:hidden;overflow:hidden;">05.01.2020 12:07</div>
<div style="position:absolute;left:266.5px;width:86.5px;top:666.34px;height:16px;line-height:16px;font-size:12px;font-weight:normal;color:#000;white-space:nowrap;text-align:left;overflow:hidden;overflow:hidden;">CURANUM AG</div>
<div style="position:absolute;left:357.5px;width:394.5px;top:666.34px;height:16px;line-height:16px;font-size:12px;font-weight:normal;color:#000;white-space:nowrap;text-align:left;overflow:hidden;overflow:hidden;">CHEFS CULINAR GmbH &amp; Co. KG</div>
<div style="position:absolute;left:756.5px;width:322.5px;top:666.34px;height:16px;line-height:16px;font-size:12px;font-weight:normal;color:#000;white-space:nowrap;text-align:left;overflow:hidden;overflow:hidden;">KORIAN Frechen 1068</div>
<div style="position:absolute;left:1083.5px;width:91.5px;top:666.34px;height:16px;line-height:16px;font-size:12px;font-weight:normal;color:#000;white-space:nowrap;text-align:left;overflow:hidden;overflow:hidden;">505023003</div>
<div style="position:absolute;left:1176px;width:83px;top:666.34px;height:16px;line-height:16px;font-size:12px;font-weight:normal;color:#000;white-space:nowrap;text-align:right;overflow:hidden;overflow:hidden;">63,100</div>
<div style="position:absolute;left:101px;width:53px;top:687.34px;height:16px;line-height:16px;font-size:12px;font-weight:normal;color:#000;white-space:nowrap;text-align:right;overflow:hidden;overflow:hidden;">151390..</div>
<div style="position:absolute;left:160.5px;width:101.5px;top:687.34px;height:16px;line-height:16px;font-size:12px;font-weight:normal;color:#000;white-space:nowrap;text-align:left;overflow:hidden;overflow:hidden;">06.01.2020 08:59</div>
<div style="position:absolute;left:266.5px;width:86.5px;top:687.34px;height:16px;line-height:16px;font-size:12px;font-weight:normal;color:#000;white-space:nowrap;text-align:left;overflow:hidden;overflow:hidden;">CURANUM AG</div>
<div style="position:absolute;left:357.5px;width:394.5px;top:687.34px;height:16px;line-height:16px;font-size:12px;font-weight:normal;color:#000;white-space:nowrap;text-align:left;overflow:hidden;overflow:hidden;">CHEFS CULINAR GmbH &amp; Co. KG</div>
<div style="position:absolute;left:756.5px;width:322.5px;top:687.34px;height:16px;line-height:16px;font-size:12px;font-weight:normal;color:#000;white-space:nowrap;text-align:left;overflow:hidden;overflow:hidden;">KORIAN Frechen 1068</div>
<div style="position:absolute;left:1083.5px;width:91.5px;top:687.34px;height:16px;line-height:16px;font-size:12px;font-weight:normal;color:#000;white-space:nowrap;text-align:left;overflow:hidden;overflow:hidden;">505023003</div>
<div style="position:absolute;left:1176px;width:83px;top:687.34px;height:16px;line-height:16px;font-size:12px;font-weight:normal;color:#000;white-space:nowrap;text-align:right;overflow:hidden;overflow:hidden;">192,920</div>
</div>
<div style="position:absolute;left:84px;top:515px;width:1px;height:21px;background:#dedede;"></div>
<div style="position:absolute;left:85px;top:515px;width:1px;height:21px;background:#fafafa;"></div>
<div style="position:absolute;left:100px;top:515px;width:1px;height:21px;background:#dedede;"></div>
<div style="position:absolute;left:101px;top:515px;width:1px;height:21px;background:#fafafa;"></div>
<div style="position:absolute;left:156px;top:515px;width:1px;height:21px;background:#dedede;"></div>
<div style="position:absolute;left:157px;top:515px;width:1px;height:21px;background:#fafafa;"></div>
<div style="position:absolute;left:262px;top:515px;width:1px;height:21px;background:#dedede;"></div>
<div style="position:absolute;left:263px;top:515px;width:1px;height:21px;background:#fafafa;"></div>
<div style="position:absolute;left:353px;top:515px;width:1px;height:21px;background:#dedede;"></div>
<div style="position:absolute;left:354px;top:515px;width:1px;height:21px;background:#fafafa;"></div>
<div style="position:absolute;left:752px;top:515px;width:1px;height:21px;background:#dedede;"></div>
<div style="position:absolute;left:753px;top:515px;width:1px;height:21px;background:#fafafa;"></div>
<div style="position:absolute;left:1079px;top:515px;width:1px;height:21px;background:#dedede;"></div>
<div style="position:absolute;left:1080px;top:515px;width:1px;height:21px;background:#fafafa;"></div>
<div style="position:absolute;left:1175px;top:515px;width:1px;height:21px;background:#dedede;"></div>
<div style="position:absolute;left:1176px;top:515px;width:1px;height:21px;background:#fafafa;"></div>
<div style="position:absolute;left:0;top:0;width:1298px;height:823px;will-change:transform;">
<div style="position:absolute;left:101px;width:53px;top:516.84px;height:16px;line-height:16px;font-size:12px;font-weight:normal;color:#000;white-space:nowrap;text-align:right;overflow:hidden;overflow:hidden;">Belegnr.</div>
<div style="position:absolute;left:160px;width:102px;top:516.84px;height:16px;line-height:16px;font-size:12px;font-weight:normal;color:#000;white-space:nowrap;text-align:left;overflow:hidden;overflow:hidden;">Datum</div>
<div style="position:absolute;left:266px;width:87px;top:516.84px;height:16px;line-height:16px;font-size:12px;font-weight:normal;color:#000;white-space:nowrap;text-align:left;overflow:hidden;overflow:hidden;">Plattform</div>
<div style="position:absolute;left:357px;width:395px;top:516.84px;height:16px;line-height:16px;font-size:12px;font-weight:normal;color:#000;white-space:nowrap;text-align:left;overflow:hidden;overflow:hidden;">Lieferant</div>
<div style="position:absolute;left:756px;width:323px;top:516.84px;height:16px;line-height:16px;font-size:12px;font-weight:normal;color:#000;white-space:nowrap;text-align:left;overflow:hidden;overflow:hidden;">Einkäufer</div>
<div style="position:absolute;left:1083px;width:92px;top:516.84px;height:16px;line-height:16px;font-size:12px;font-weight:normal;color:#000;white-space:nowrap;text-align:left;overflow:hidden;overflow:hidden;">Kd.-Nr</div>
<div style="position:absolute;left:1176px;width:83px;top:516.84px;height:16px;line-height:16px;font-size:12px;font-weight:normal;color:#000;white-space:nowrap;text-align:right;overflow:hidden;overflow:hidden;">Wert</div>
</div>
<div style="position:absolute;left:1264px;top:532px;width:16px;height:149px;background:#f0f0f0;"></div>
<div style="position:absolute;left:1264px;top:549px;width:15px;height:11px;background:#cdcdcd;"></div>
<svg style="position:absolute;left:1266.5px;top:537px" width="10" height="8" viewBox="0 0 10 8"><path d="M2 6.7 L4.8 2.6 L7.6 6.7" stroke="#606060" stroke-width="1.8" fill="none"/></svg>
<svg style="position:absolute;left:1266.5px;top:668px" width="10" height="8" viewBox="0 0 10 8"><path d="M2 1.3 L4.8 5.4 L7.6 1.3" stroke="#606060" stroke-width="1.8" fill="none"/></svg>
<svg style="position:absolute;left:1264px;top:515px" width="16" height="14" viewBox="0 0 16 14"><path d="M7.5 3.6 L10.4 7.2 L4.6 7.2 Z M7.5 7.4 L10.4 11.2 L4.6 11.2 Z" fill="#111"/></svg>
<svg style="position:absolute;left:1264px;top:683px" width="16" height="14" viewBox="0 0 16 14"><path d="M4.6 2.8 L10.4 2.8 L7.5 6.6 Z M4.6 6.6 L10.4 6.6 L7.5 10.4 Z" fill="#111"/></svg>
<div style="position:absolute;left:130px;top:702.36px;line-height:13.5px;font-size:9.5px;font-weight:normal;color:#153566;white-space:nowrap;letter-spacing:0.55px;-webkit-text-stroke:0.45px #153566;">10 Belege</div>
<div style="position:absolute;left:245px;top:699px;width:1018px;height:16px;background:#f0f0f0;"></div>
<svg style="position:absolute;left:249px;top:701.7px" width="8" height="9" viewBox="0 0 8 9"><path d="M6.2 1 L2.2 4.5 L6.2 8" stroke="#c6c6c6" stroke-width="1.9" fill="none"/></svg>
<svg style="position:absolute;left:1250px;top:701.7px" width="8" height="9" viewBox="0 0 8 9"><path d="M1.5 1 L5.5 4.5 L1.5 8" stroke="#c6c6c6" stroke-width="1.9" fill="none"/></svg>
<div style="position:absolute;left:65px;top:718px;width:1215px;height:20px;background:#edf7fd;"></div>
<div style="position:absolute;left:1104px;top:720.84px;line-height:16px;font-size:12px;font-weight:bold;color:#0a2550;white-space:nowrap;letter-spacing:-0.15px;">Gesamt:</div>
<div style="position:absolute;right:27px;top:720.84px;line-height:16px;font-size:12px;font-weight:bold;color:#0a2550;white-space:nowrap;letter-spacing:0.25px;">7.299,750</div>
<div style="position:absolute;left:881px;top:749px;width:198px;height:28px;background:#e1e1e1;border:1px solid #adadad;"></div>
<div style="position:absolute;left:881px;width:198px;text-align:center;top:755.14px;line-height:16px;font-size:12px;font-weight:normal;color:#000;white-space:nowrap;">Belegdetails...</div>
<div style="position:absolute;left:1081px;top:749px;width:198px;height:28px;background:#e1e1e1;border:1px solid #adadad;"></div>
<div style="position:absolute;left:1081px;width:198px;text-align:center;top:755.14px;line-height:16px;font-size:12px;font-weight:normal;color:#000;white-space:nowrap;">Auswertung drucken</div>
<svg style="position:absolute;left:634px;top:748px" width="32" height="30" viewBox="0 0 32 30"><path d="M16 7 L26.3 23.6 L8.2 24.3 Z" fill="#3a3a3a" stroke="#3a3a3a" stroke-width="1" stroke-linejoin="round"/><path d="M15 5.8 L6.5 21.6 L25.5 21.6 Z" fill="#f8f8f8" stroke="#111" stroke-width="1" stroke-linejoin="round"/><path d="M14.2 11 L16.2 11 L15.6 17.3 L14.8 17.3 Z" fill="#000"/><circle cx="15.2" cy="19.7" r="1.05" fill="#000"/></svg>
<div style="position:absolute;left:671px;top:754.84px;line-height:16px;font-size:12px;font-weight:normal;color:#a4a4a4;white-space:nowrap;text-decoration:underline;letter-spacing:0.08px;">Stand: Do, 9 Jan 2020 03:42 Uhr</div>
<div style="position:absolute;left:49px;top:792px;width:1247px;height:29px;background:#f0f0f0;"></div>
</body></html>
